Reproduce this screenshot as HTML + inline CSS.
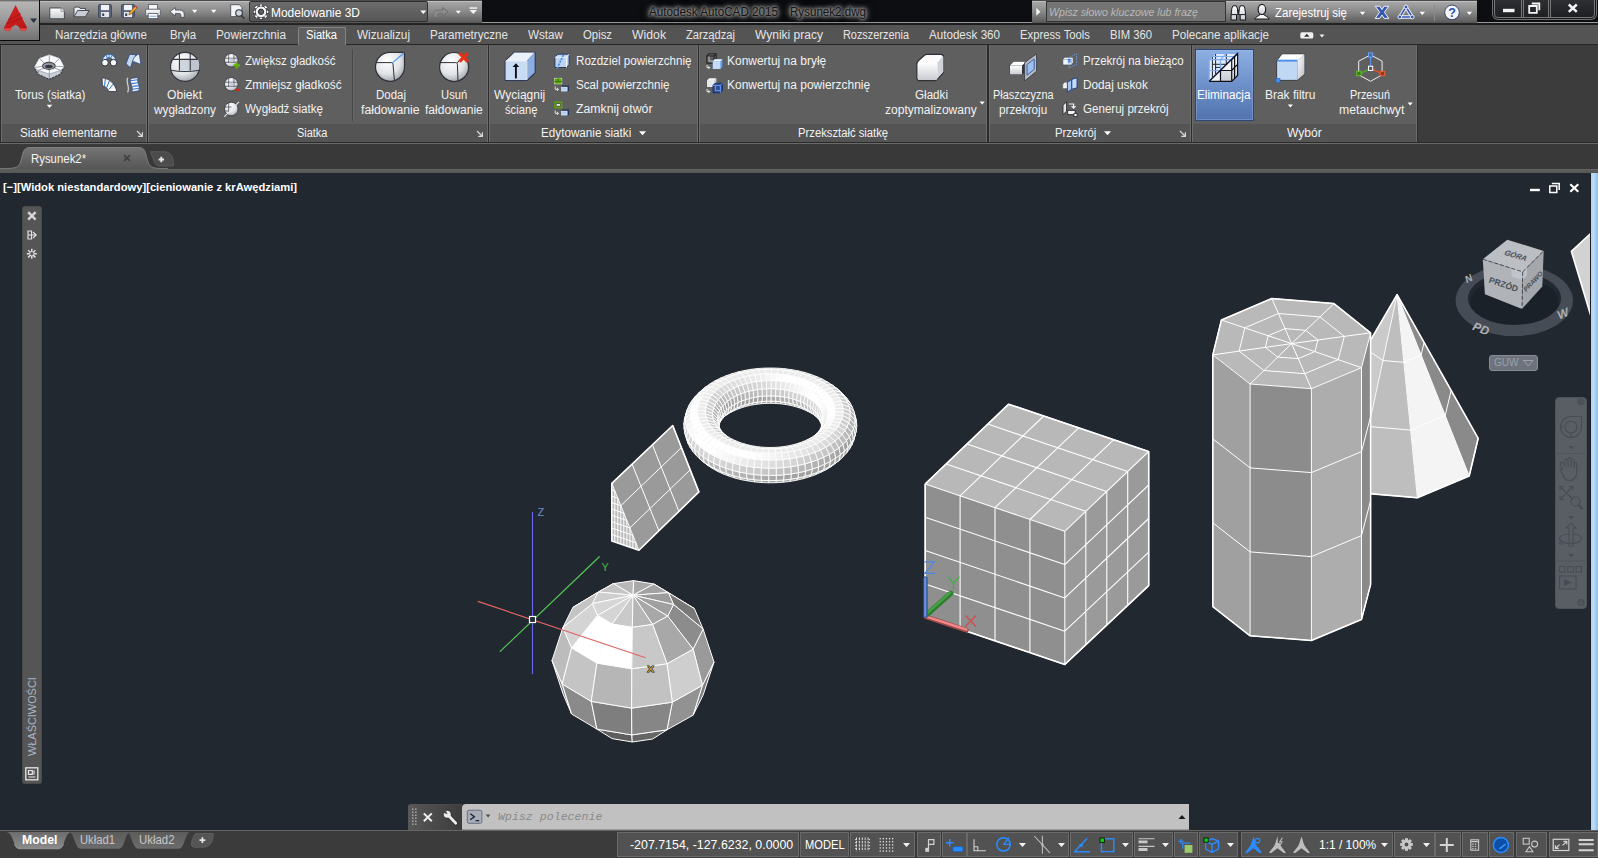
<!DOCTYPE html>
<html lang="pl"><head><meta charset="utf-8"><title>Autodesk AutoCAD 2015 - Rysunek2.dwg</title>
<style>
html,body{margin:0;padding:0;background:#212830;overflow:hidden}
#app{position:relative;width:1598px;height:858px;overflow:hidden;background:#212830;font-family:"Liberation Sans",sans-serif}
#app div,#app svg.ic{position:absolute;box-sizing:border-box}
.tx{position:absolute;white-space:pre;transform-origin:0 50%;display:inline-block}
#titlebar{left:0;top:0;width:1598px;height:24.5px;background:linear-gradient(#0c0e11 0,#0c0e11 22px,#9a9a9a 22.3px,#9a9a9a 22.9px,#1c1c1c 23.2px,#1c1c1c 24.5px)}
#qat{left:40px;top:0;width:442px;height:24.5px;background:linear-gradient(#4a4a4d 0,#4a4a4d 1px,#bfbfbf 1px,#bfbfbf 2px,#a6a6a6 2px,#888 12px,#5e5e5e 22px,#505050 23px,#252525 23.5px,#222 24px)}
#wsbox{left:249.200px;top:1.300px;width:179px;height:21.200px;background:linear-gradient(#6c6c6c,#565656);border:1px solid #303030;border-radius:2px}
#info{left:1032.300px;top:0;width:444.500px;height:24.5px;background:linear-gradient(#4a4a4d 0,#4a4a4d 1px,#bfbfbf 1px,#bfbfbf 2px,#a6a6a6 2px,#888 12px,#5e5e5e 22px,#505050 23px,#252525 23.5px,#222 24px)}
#search{left:1046px;top:1.300px;width:179.500px;height:21.200px;background:#747474;border:1px solid #343434}
#winbtn{left:1494px;top:-2px;width:101px;height:19.500px;border:1px solid #777;border-radius:0 0 4px 4px;background:linear-gradient(#2e3034,#1d1f23);box-shadow:0 0 0 1px #16181b,0 0 0 2px #6e6e6e}
#winbtn i{position:absolute;top:0;width:1px;height:18px;background:#777;box-shadow:2px 0 0 #777}
#appbtn{left:0;top:0;width:40px;height:41px;background:linear-gradient(#5a5a5a 0,#b4b4b4 2px,#a4a4a4 14px,#8a8a8a 28px,#747474 39px);border-right:1px solid #0a0a0a;border-bottom:1.5px solid #0a0a0a}
#tabrow{left:0;top:24.5px;width:1598px;height:20.3px;background:#545454;border-bottom:1px solid #262626}
#acttab{left:298px;top:27px;width:48px;height:18px;background:#5f5f5f;border:1px solid #858585;border-bottom:none;border-radius:2px 2px 0 0}
#ribbon{left:0;top:44.8px;width:1598px;height:98px;background:#2c2c2c}
#ribright{left:1418px;top:44.8px;width:180px;height:98px;background:#3c3c3c}
.pnl{top:44.8px;height:97px;background:#5f5f5f;border-left:1px solid #6c6c6c;border-right:1px solid #6c6c6c}
.pnl b{position:absolute;left:0;right:0;bottom:0;height:18.2px;background:#545454}
#ribline{left:0;top:141.8px;width:1598px;height:2.2px;background:linear-gradient(#2a2a2a 45%,#6a6a6a 55%)}
#filebar{left:0;top:144px;width:1598px;height:25px;background:#393939}
#fileband{left:0;top:168.500px;width:1598px;height:4.600px;background:linear-gradient(#686868 0,#5b5b5b 35%,#585858)}
#status{left:0;top:830.300px;width:1598px;height:28px;background:#3b3b3b;border-top:1px solid #666}
.sb{top:832px;height:25px;background:#525252;border:1px solid #6a6a6a}
#cmdl{left:408px;top:804px;width:54px;height:26px;background:#4e4e4e;border-radius:3px 0 0 0}
#cmdr{left:462px;top:804px;width:727px;height:26px;background:#c1c1c1;border-radius:4px 0 0 0;border-bottom:1px solid #999}
#props{left:22px;top:205.500px;width:20px;height:578.500px;background:#555;border-radius:2.500px;border:1px solid #4a4a4a}
#elim{left:1194.600px;top:49px;width:59px;height:71.600px;background:linear-gradient(#8eafe1,#7093cd 45%,#5172ad);border:1px solid #2c4779;box-shadow:inset 0 0 0 1px rgba(160,190,235,.35)}
#rstripe{left:1590px;top:173px;width:8px;height:658px;background:linear-gradient(90deg,#1b2026 0,#1b2026 1px,#b4d6f4 1px,#bcdcf6 4px,#a0c8ee 6px,#94c0ec 8px)}
#navbar{left:1555px;top:397px;width:32px;height:212px;background:#595e65;border-radius:4px;border:1px solid #4d5259}
#guw{left:1489px;top:355px;width:49px;height:16px;background:#6d727c;border:1px solid #878c96;border-radius:3px}
.vsep{width:1px;background:#474747;box-shadow:1px 0 0 #686868}

</style></head>
<body>
<div id="app">
<svg id="scene" width="1598" height="858" viewBox="0 0 1598 858" style="position:absolute;left:0;top:0">
<g stroke="#fff" stroke-width="0.9" stroke-linejoin="round">
<polygon points="771.7,368 764.7,368.1 765.2,369.4 771.6,369.3" fill="#d2d2d2"/>
<polygon points="778.6,368.2 771.7,368 771.6,369.3 777.9,369.5" fill="#d0d0d0"/>
<polygon points="764.7,368.1 757.8,368.5 758.9,369.8 765.2,369.4" fill="#d3d3d3"/>
<polygon points="785.5,368.8 778.6,368.2 777.9,369.5 784.2,370.1" fill="#cfcfcf"/>
<polygon points="757.8,368.5 751,369.3 752.7,370.5 758.9,369.8" fill="#d5d5d5"/>
<polygon points="792.3,369.8 785.5,368.8 784.2,370.1 790.3,370.9" fill="#cecece"/>
<polygon points="771.2,401.1 766.6,401.2 766.3,403.4 771.3,403.3" fill="#a1a1a1"/>
<polygon points="775.8,401.3 771.2,401.1 771.3,403.3 776.3,403.5" fill="#a1a1a1"/>
<polygon points="766.6,401.2 762,401.5 761.3,403.7 766.3,403.4" fill="#a1a1a1"/>
<polygon points="780.4,401.7 775.8,401.3 776.3,403.5 781.3,403.9" fill="#a1a1a1"/>
<polygon points="751,369.3 744.3,370.5 746.6,371.6 752.7,370.5" fill="#d6d6d6"/>
<polygon points="762,401.5 757.5,402 756.3,404.3 761.3,403.7" fill="#a1a1a1"/>
<polygon points="784.9,402.3 780.4,401.7 781.3,403.9 786.2,404.6" fill="#a1a1a1"/>
<polygon points="798.9,371 792.3,369.8 790.3,370.9 796.4,372.1" fill="#cdcdcd"/>
<polygon points="757.5,402 753.1,402.8 751.5,405.1 756.3,404.3" fill="#a1a1a1"/>
<polygon points="789.2,403.2 784.9,402.3 786.2,404.6 791,405.5" fill="#a1a1a1"/>
<polygon points="744.3,370.5 737.8,372 740.7,372.9 746.6,371.6" fill="#d8d8d8"/>
<polygon points="753.1,402.8 748.8,403.8 746.8,406.2 751.5,405.1" fill="#a1a1a1"/>
<polygon points="805.3,372.6 798.9,371 796.4,372.1 802.2,373.5" fill="#cccccc"/>
<polygon points="793.5,404.2 789.2,403.2 791,405.5 795.6,406.7" fill="#a1a1a1"/>
<polygon points="737.8,372 731.6,373.8 735,374.6 740.7,372.9" fill="#dadada"/>
<polygon points="748.8,403.8 744.7,405 742.3,407.5 746.8,406.2" fill="#a1a1a1"/>
<polygon points="771.6,369.3 765.2,369.4 765.8,373.9 771.4,373.8" fill="#ebebeb"/>
<polygon points="777.9,369.5 771.6,369.3 771.4,373.8 777.1,374" fill="#ebebeb"/>
<polygon points="797.5,405.5 793.5,404.2 795.6,406.7 800.1,408.1" fill="#a1a1a1"/>
<polygon points="765.2,369.4 758.9,369.8 760.2,374.3 765.8,373.9" fill="#ebebeb"/>
<polygon points="811.4,374.6 805.3,372.6 802.2,373.5 807.8,375.3" fill="#cccccc"/>
<polygon points="784.2,370.1 777.9,369.5 777.1,374 782.7,374.5" fill="#ebebeb"/>
<polygon points="758.9,369.8 752.7,370.5 754.6,374.9 760.2,374.3" fill="#ebebeb"/>
<polygon points="744.7,405 740.7,406.3 738,409 742.3,407.5" fill="#a1a1a1"/>
<polygon points="771.2,395.9 766.7,395.9 766.6,401.2 771.2,401.1" fill="#a9a9a9"/>
<polygon points="790.3,370.9 784.2,370.1 782.7,374.5 788.2,375.3" fill="#ebebeb"/>
<polygon points="775.6,396 771.2,395.9 771.2,401.1 775.8,401.3" fill="#ababab"/>
<polygon points="766.7,395.9 762.3,396.2 762,401.5 766.6,401.2" fill="#a6a6a6"/>
<polygon points="780.1,396.4 775.6,396 775.8,401.3 780.4,401.7" fill="#aeaeae"/>
<polygon points="731.6,373.8 725.7,375.9 729.6,376.5 735,374.6" fill="#dcdcdc"/>
<polygon points="801.4,407 797.5,405.5 800.1,408.1 804.3,409.7" fill="#a1a1a1"/>
<polygon points="752.7,370.5 746.6,371.6 749.2,375.9 754.6,374.9" fill="#ebebeb"/>
<polygon points="762.3,396.2 757.9,396.7 757.5,402 762,401.5" fill="#a3a3a3"/>
<polygon points="784.4,397 780.1,396.4 780.4,401.7 784.9,402.3" fill="#b0b0b0"/>
<polygon points="796.4,372.1 790.3,370.9 788.2,375.3 793.5,376.3" fill="#ebebeb"/>
<polygon points="817.2,376.8 811.4,374.6 807.8,375.3 813.1,377.3" fill="#cbcbcb"/>
<polygon points="757.9,396.7 753.7,397.5 753.1,402.8 757.5,402" fill="#a1a1a1"/>
<polygon points="740.7,406.3 737,407.9 733.9,410.8 738,409" fill="#a1a1a1"/>
<polygon points="788.6,397.8 784.4,397 784.9,402.3 789.2,403.2" fill="#b2b2b2"/>
<polygon points="746.6,371.6 740.7,372.9 743.9,377.1 749.2,375.9" fill="#ebebeb"/>
<polygon points="753.7,397.5 749.5,398.4 748.8,403.8 753.1,402.8" fill="#a1a1a1"/>
<polygon points="805,408.6 801.4,407 804.3,409.7 808.2,411.5" fill="#a1a1a1"/>
<polygon points="802.2,373.5 796.4,372.1 793.5,376.3 798.7,377.6" fill="#ebebeb"/>
<polygon points="792.7,398.9 788.6,397.8 789.2,403.2 793.5,404.2" fill="#b4b4b4"/>
<polygon points="725.7,375.9 720.1,378.3 724.5,378.7 729.6,376.5" fill="#dedede"/>
<polygon points="771.4,373.8 765.8,373.9 766.3,380.8 771.3,380.7" fill="#f4f4f4"/>
<polygon points="777.1,374 771.4,373.8 771.3,380.7 776.3,380.9" fill="#f8f8f8"/>
<polygon points="765.8,373.9 760.2,374.3 761.3,381.1 766.3,380.8" fill="#f0f0f0"/>
<polygon points="782.7,374.5 777.1,374 776.3,380.9 781.3,381.3" fill="#fcfcfc"/>
<polygon points="740.7,372.9 735,374.6 738.9,378.5 743.9,377.1" fill="#ebebeb"/>
<polygon points="771.2,388.6 766.6,388.7 766.7,395.9 771.2,395.9" fill="#c5c5c5"/>
<polygon points="749.5,398.4 745.5,399.6 744.7,405 748.8,403.8" fill="#a1a1a1"/>
<polygon points="775.8,388.8 771.2,388.6 771.2,395.9 775.6,396" fill="#c7c7c7"/>
<polygon points="760.2,374.3 754.6,374.9 756.3,381.7 761.3,381.1" fill="#ececec"/>
<polygon points="737,407.9 733.6,409.7 730.2,412.7 733.9,410.8" fill="#a1a1a1"/>
<polygon points="766.6,388.7 762,389 762.3,396.2 766.7,395.9" fill="#c2c2c2"/>
<polygon points="822.7,379.3 817.2,376.8 813.1,377.3 818,379.6" fill="#cbcbcb"/>
<polygon points="780.4,389.2 775.8,388.8 775.6,396 780.1,396.4" fill="#cacaca"/>
<polygon points="788.2,375.3 782.7,374.5 781.3,381.3 786.2,382" fill="#ffffff"/>
<polygon points="796.6,400.1 792.7,398.9 793.5,404.2 797.5,405.5" fill="#b5b5b5"/>
<polygon points="807.8,375.3 802.2,373.5 798.7,377.6 803.7,379.2" fill="#ebebeb"/>
<polygon points="762,389 757.5,389.5 757.9,396.7 762.3,396.2" fill="#bfbfbf"/>
<polygon points="784.9,389.8 780.4,389.2 780.1,396.4 784.4,397" fill="#cccccc"/>
<polygon points="754.6,374.9 749.2,375.9 751.5,382.5 756.3,381.7" fill="#e9e9e9"/>
<polygon points="808.3,410.5 805,408.6 808.2,411.5 811.9,413.5" fill="#a1a1a1"/>
<polygon points="771.3,380.7 766.3,380.8 766.6,388.7 771.2,388.6" fill="#dddddd"/>
<polygon points="776.3,380.9 771.3,380.7 771.2,388.6 775.8,388.8" fill="#e1e1e1"/>
<polygon points="766.3,380.8 761.3,381.1 762,389 766.6,388.7" fill="#dadada"/>
<polygon points="793.5,376.3 788.2,375.3 786.2,382 791,382.9" fill="#ffffff"/>
<polygon points="757.5,389.5 753.1,390.3 753.7,397.5 757.9,396.7" fill="#bcbcbc"/>
<polygon points="781.3,381.3 776.3,380.9 775.8,388.8 780.4,389.2" fill="#e4e4e4"/>
<polygon points="745.5,399.6 741.7,400.9 740.7,406.3 744.7,405" fill="#a1a1a1"/>
<polygon points="761.3,381.1 756.3,381.7 757.5,389.5 762,389" fill="#d7d7d7"/>
<polygon points="789.2,390.6 784.9,389.8 784.4,397 788.6,397.8" fill="#cecece"/>
<polygon points="735,374.6 729.6,376.5 734,380.2 738.9,378.5" fill="#ebebeb"/>
<polygon points="786.2,382 781.3,381.3 780.4,389.2 784.9,389.8" fill="#e8e8e8"/>
<polygon points="720.1,378.3 714.8,380.9 719.8,381.1 724.5,378.7" fill="#e1e1e1"/>
<polygon points="800.3,401.5 796.6,400.1 797.5,405.5 801.4,407" fill="#b7b7b7"/>
<polygon points="749.2,375.9 743.9,377.1 746.8,383.6 751.5,382.5" fill="#e6e6e6"/>
<polygon points="733.6,409.7 730.4,411.6 726.7,414.8 730.2,412.7" fill="#a1a1a1"/>
<polygon points="753.1,390.3 748.8,391.2 749.5,398.4 753.7,397.5" fill="#b9b9b9"/>
<polygon points="756.3,381.7 751.5,382.5 753.1,390.3 757.5,389.5" fill="#d4d4d4"/>
<polygon points="798.7,377.6 793.5,376.3 791,382.9 795.6,384.1" fill="#ffffff"/>
<polygon points="813.1,377.3 807.8,375.3 803.7,379.2 808.4,381" fill="#ebebeb"/>
<polygon points="793.5,391.7 789.2,390.6 788.6,397.8 792.7,398.9" fill="#d0d0d0"/>
<polygon points="791,382.9 786.2,382 784.9,389.8 789.2,390.6" fill="#ececec"/>
<polygon points="741.7,400.9 738.1,402.5 737,407.9 740.7,406.3" fill="#a1a1a1"/>
<polygon points="827.7,382.1 822.7,379.3 818,379.6 822.6,382.1" fill="#cacaca"/>
<polygon points="811.4,412.4 808.3,410.5 811.9,413.5 815.2,415.7" fill="#a1a1a1"/>
<polygon points="743.9,377.1 738.9,378.5 742.3,384.9 746.8,383.6" fill="#e3e3e3"/>
<polygon points="751.5,382.5 746.8,383.6 748.8,391.2 753.1,390.3" fill="#d1d1d1"/>
<polygon points="748.8,391.2 744.7,392.4 745.5,399.6 749.5,398.4" fill="#b6b6b6"/>
<polygon points="803.8,403.1 800.3,401.5 801.4,407 805,408.6" fill="#b8b8b8"/>
<polygon points="795.6,384.1 791,382.9 789.2,390.6 793.5,391.7" fill="#f0f0f0"/>
<polygon points="729.6,376.5 724.5,378.7 729.5,382.2 734,380.2" fill="#ebebeb"/>
<polygon points="797.5,393 793.5,391.7 792.7,398.9 796.6,400.1" fill="#d2d2d2"/>
<polygon points="803.7,379.2 798.7,377.6 795.6,384.1 800.1,385.5" fill="#ffffff"/>
<polygon points="730.4,411.6 727.5,413.7 723.6,417.1 726.7,414.8" fill="#a1a1a1"/>
<polygon points="746.8,383.6 742.3,384.9 744.7,392.4 748.8,391.2" fill="#cecece"/>
<polygon points="738.1,402.5 734.8,404.2 733.6,409.7 737,407.9" fill="#a1a1a1"/>
<polygon points="818,379.6 813.1,377.3 808.4,381 812.9,383" fill="#ebebeb"/>
<polygon points="744.7,392.4 740.7,393.8 741.7,400.9 745.5,399.6" fill="#b2b2b2"/>
<polygon points="714.8,380.9 710,383.8 715.4,383.7 719.8,381.1" fill="#e4e4e4"/>
<polygon points="840.6,391.7 836.2,388.3 832.3,385.1 836.5,388.3" fill="#ababab"/>
<polygon points="738.9,378.5 734,380.2 738,386.4 742.3,384.9" fill="#e0e0e0"/>
<polygon points="800.1,385.5 795.6,384.1 793.5,391.7 797.5,393" fill="#f4f4f4"/>
<polygon points="801.4,394.4 797.5,393 796.6,400.1 800.3,401.5" fill="#d4d4d4"/>
<polygon points="814.1,414.6 811.4,412.4 815.2,415.7 818.2,418" fill="#a1a1a1"/>
<polygon points="807.1,404.9 803.8,403.1 805,408.6 808.3,410.5" fill="#b8b8b8"/>
<polygon points="808.4,381 803.7,379.2 800.1,385.5 804.3,387.1" fill="#ffffff"/>
<polygon points="742.3,384.9 738,386.4 740.7,393.8 744.7,392.4" fill="#cbcbcb"/>
<polygon points="832.3,385.1 827.7,382.1 822.6,382.1 826.8,384.9" fill="#cacaca"/>
<polygon points="724.5,378.7 719.8,381.1 725.2,384.4 729.5,382.2" fill="#ebebeb"/>
<polygon points="740.7,393.8 737,395.4 738.1,402.5 741.7,400.9" fill="#afafaf"/>
<polygon points="734.8,404.2 731.7,406 730.4,411.6 733.6,409.7" fill="#a1a1a1"/>
<polygon points="804.3,387.1 800.1,385.5 797.5,393 801.4,394.4" fill="#f8f8f8"/>
<polygon points="734,380.2 729.5,382.2 733.9,388.2 738,386.4" fill="#dedede"/>
<polygon points="727.5,413.7 725,415.9 720.8,419.5 723.6,417.1" fill="#a1a1a1"/>
<polygon points="805,396.1 801.4,394.4 800.3,401.5 803.8,403.1" fill="#d5d5d5"/>
<polygon points="701.7,390.3 697.7,393.9 701.9,390.3 705.7,387" fill="#d5d5d5"/>
<polygon points="822.6,382.1 818,379.6 812.9,383 817,385.3" fill="#ebebeb"/>
<polygon points="810,406.8 807.1,404.9 808.3,410.5 811.4,412.4" fill="#b9b9b9"/>
<polygon points="812.9,383 808.4,381 804.3,387.1 808.2,388.9" fill="#ffffff"/>
<polygon points="738,386.4 733.9,388.2 737,395.4 740.7,393.8" fill="#c9c9c9"/>
<polygon points="710,383.8 705.7,387 711.5,386.6 715.4,383.7" fill="#e6e6e6"/>
<polygon points="737,395.4 733.6,397.2 734.8,404.2 738.1,402.5" fill="#acacac"/>
<polygon points="808.2,388.9 804.3,387.1 801.4,394.4 805,396.1" fill="#fbfbfb"/>
<polygon points="844.4,395.4 840.6,391.7 836.5,388.3 840.1,391.7" fill="#ababab"/>
<polygon points="719.8,381.1 715.4,383.7 721.3,386.7 725.2,384.4" fill="#ebebeb"/>
<polygon points="731.7,406 729,408 727.5,413.7 730.4,411.6" fill="#a1a1a1"/>
<polygon points="808.3,397.9 805,396.1 803.8,403.1 807.1,404.9" fill="#d6d6d6"/>
<polygon points="729.5,382.2 725.2,384.4 730.2,390.1 733.9,388.2" fill="#dcdcdc"/>
<polygon points="836.5,388.3 832.3,385.1 826.8,384.9 830.6,387.8" fill="#cacaca"/>
<polygon points="733.9,388.2 730.2,390.1 733.6,397.2 737,395.4" fill="#c6c6c6"/>
<polygon points="812.7,408.9 810,406.8 811.4,412.4 814.1,414.6" fill="#b9b9b9"/>
<polygon points="817,385.3 812.9,383 808.2,388.9 811.9,390.9" fill="#ffffff"/>
<polygon points="826.8,384.9 822.6,382.1 817,385.3 820.7,387.7" fill="#ebebeb"/>
<polygon points="733.6,397.2 730.4,399.1 731.7,406 734.8,404.2" fill="#a9a9a9"/>
<polygon points="811.9,390.9 808.2,388.9 805,396.1 808.3,397.9" fill="#fefefe"/>
<polygon points="811.4,399.9 808.3,397.9 807.1,404.9 810,406.8" fill="#d6d6d6"/>
<polygon points="697.7,393.9 694.1,397.7 698.5,393.9 701.9,390.3" fill="#d8d8d8"/>
<polygon points="729,408 726.5,410.2 725,415.9 727.5,413.7" fill="#a1a1a1"/>
<polygon points="725.2,384.4 721.3,386.7 726.7,392.2 730.2,390.1" fill="#dadada"/>
<polygon points="705.7,387 701.9,390.3 708,389.7 711.5,386.6" fill="#eaeaea"/>
<polygon points="715.4,383.7 711.5,386.6 717.8,389.3 721.3,386.7" fill="#ebebeb"/>
<polygon points="730.2,390.1 726.7,392.2 730.4,399.1 733.6,397.2" fill="#c3c3c3"/>
<polygon points="815,411.1 812.7,408.9 814.1,414.6 816.5,416.9" fill="#b9b9b9"/>
<polygon points="730.4,399.1 727.5,401.2 729,408 731.7,406" fill="#a5a5a5"/>
<polygon points="820.7,387.7 817,385.3 811.9,390.9 815.2,393.1" fill="#ffffff"/>
<polygon points="847.7,399.2 844.4,395.4 840.1,391.7 843.2,395.3" fill="#ababab"/>
<polygon points="815.2,393.1 811.9,390.9 808.3,397.9 811.4,399.9" fill="#ffffff"/>
<polygon points="840.1,391.7 836.5,388.3 830.6,387.8 833.9,390.9" fill="#cacaca"/>
<polygon points="830.6,387.8 826.8,384.9 820.7,387.7 824.1,390.4" fill="#ebebeb"/>
<polygon points="814.1,402.1 811.4,399.9 810,406.8 812.7,408.9" fill="#d6d6d6"/>
<polygon points="726.5,410.2 724.4,412.5 722.8,418.3 725,415.9" fill="#a1a1a1"/>
<polygon points="721.3,386.7 717.8,389.3 723.6,394.5 726.7,392.2" fill="#d8d8d8"/>
<polygon points="726.7,392.2 723.6,394.5 727.5,401.2 730.4,399.1" fill="#c1c1c1"/>
<polygon points="727.5,401.2 725,403.4 726.5,410.2 729,408" fill="#a2a2a2"/>
<polygon points="817,413.4 815,411.1 816.5,416.9 818.6,419.2" fill="#b8b8b8"/>
<polygon points="711.5,386.6 708,389.7 714.7,392 717.8,389.3" fill="#ebebeb"/>
<polygon points="824.1,390.4 820.7,387.7 815.2,393.1 818.2,395.4" fill="#ffffff"/>
<polygon points="701.9,390.3 698.5,393.9 704.9,392.9 708,389.7" fill="#ededed"/>
<polygon points="818.2,395.4 815.2,393.1 811.4,399.9 814.1,402.1" fill="#ffffff"/>
<polygon points="694.1,397.7 691.2,401.6 695.8,397.6 698.5,393.9" fill="#dbdbdb"/>
<polygon points="816.5,404.3 814.1,402.1 812.7,408.9 815,411.1" fill="#d6d6d6"/>
<polygon points="833.9,390.9 830.6,387.8 824.1,390.4 827,393.1" fill="#ebebeb"/>
<polygon points="724.4,412.5 722.6,414.8 721,420.7 722.8,418.3" fill="#a1a1a1"/>
<polygon points="843.2,395.3 840.1,391.7 833.9,390.9 836.8,394.2" fill="#cacaca"/>
<polygon points="723.6,394.5 720.8,396.9 725,403.4 727.5,401.2" fill="#bebebe"/>
<polygon points="717.8,389.3 714.7,392 720.8,396.9 723.6,394.5" fill="#d6d6d6"/>
<polygon points="850.4,403.2 847.7,399.2 843.2,395.3 845.8,399.1" fill="#acacac"/>
<polygon points="725,403.4 722.8,405.7 724.4,412.5 726.5,410.2" fill="#a1a1a1"/>
<polygon points="818.6,415.8 817,413.4 818.6,419.2 820.3,421.7" fill="#b8b8b8"/>
<polygon points="820.8,397.9 818.2,395.4 814.1,402.1 816.5,404.3" fill="#ffffff"/>
<polygon points="827,393.1 824.1,390.4 818.2,395.4 820.8,397.9" fill="#ffffff"/>
<polygon points="708,389.7 704.9,392.9 712,394.9 714.7,392" fill="#ebebeb"/>
<polygon points="818.6,406.7 816.5,404.3 815,411.1 817,413.4" fill="#d6d6d6"/>
<polygon points="698.5,393.9 695.8,397.6 702.4,396.3 704.9,392.9" fill="#f1f1f1"/>
<polygon points="722.6,414.8 721.2,417.3 719.5,423.2 721,420.7" fill="#a1a1a1"/>
<polygon points="720.8,396.9 718.4,399.5 722.8,405.7 725,403.4" fill="#bcbcbc"/>
<polygon points="691.2,401.6 688.8,405.6 693.6,401.4 695.8,397.6" fill="#dedede"/>
<polygon points="836.8,394.2 833.9,390.9 827,393.1 829.6,396.1" fill="#ebebeb"/>
<polygon points="714.7,392 712,394.9 718.4,399.5 720.8,396.9" fill="#d4d4d4"/>
<polygon points="722.8,405.7 721,408.2 722.6,414.8 724.4,412.5" fill="#a1a1a1"/>
<polygon points="819.9,418.3 818.6,415.8 820.3,421.7 821.6,424.3" fill="#b7b7b7"/>
<polygon points="823.1,400.5 820.8,397.9 816.5,404.3 818.6,406.7" fill="#fefefe"/>
<polygon points="845.8,399.1 843.2,395.3 836.8,394.2 839.1,397.6" fill="#cbcbcb"/>
<polygon points="829.6,396.1 827,393.1 820.8,397.9 823.1,400.5" fill="#ffffff"/>
<polygon points="820.3,409.2 818.6,406.7 817,413.4 818.6,415.8" fill="#d5d5d5"/>
<polygon points="852.5,407.3 850.4,403.2 845.8,399.1 847.8,402.9" fill="#adadad"/>
<polygon points="704.9,392.9 702.4,396.3 709.7,397.9 712,394.9" fill="#ebebeb"/>
<polygon points="721.2,417.3 720.1,419.8 718.4,425.8 719.5,423.2" fill="#a1a1a1"/>
<polygon points="718.4,399.5 716.4,402.1 721,408.2 722.8,405.7" fill="#bababa"/>
<polygon points="721,408.2 719.5,410.7 721.2,417.3 722.6,414.8" fill="#a1a1a1"/>
<polygon points="712,394.9 709.7,397.9 716.4,402.1 718.4,399.5" fill="#d3d3d3"/>
<polygon points="695.8,397.6 693.6,401.4 700.4,399.7 702.4,396.3" fill="#f5f5f5"/>
<polygon points="820.8,420.8 819.9,418.3 821.6,424.3 822.5,426.9" fill="#b6b6b6"/>
<polygon points="839.1,397.6 836.8,394.2 829.6,396.1 831.6,399.1" fill="#ebebeb"/>
<polygon points="824.9,403.2 823.1,400.5 818.6,406.7 820.3,409.2" fill="#fcfcfc"/>
<polygon points="821.6,411.7 820.3,409.2 818.6,415.8 819.9,418.3" fill="#d4d4d4"/>
<polygon points="688.8,405.6 687.1,409.8 691.9,405.3 693.6,401.4" fill="#e2e2e2"/>
<polygon points="831.6,399.1 829.6,396.1 823.1,400.5 824.9,403.2" fill="#ffffff"/>
<polygon points="847.8,402.9 845.8,399.1 839.1,397.6 840.9,401.1" fill="#cbcbcb"/>
<polygon points="720.1,419.8 719.5,422.3 717.7,428.5 718.4,425.8" fill="#a1a1a1"/>
<polygon points="685.4,415.9 684.3,420.2 686,414 687.1,409.8" fill="#cbcbcb"/>
<polygon points="716.4,402.1 714.8,404.9 719.5,410.7 721,408.2" fill="#b7b7b7"/>
<polygon points="702.4,396.3 700.4,399.7 708,401 709.7,397.9" fill="#ebebeb"/>
<polygon points="719.5,410.7 718.4,413.3 720.1,419.8 721.2,417.3" fill="#a1a1a1"/>
<polygon points="854,411.5 852.5,407.3 847.8,402.9 849.2,406.9" fill="#adadad"/>
<polygon points="709.7,397.9 708,401 714.8,404.9 716.4,402.1" fill="#d1d1d1"/>
<polygon points="826.3,406 824.9,403.2 820.3,409.2 821.6,411.7" fill="#f9f9f9"/>
<polygon points="822.5,414.4 821.6,411.7 819.9,418.3 820.8,420.8" fill="#d3d3d3"/>
<polygon points="840.9,401.1 839.1,397.6 831.6,399.1 833.2,402.2" fill="#ebebeb"/>
<polygon points="856.6,421.9 855.7,417.6 854,411.5 854.8,415.7" fill="#a1a1a1"/>
<polygon points="693.6,401.4 691.9,405.3 698.9,403.3 700.4,399.7" fill="#f9f9f9"/>
<polygon points="833.2,402.2 831.6,399.1 824.9,403.2 826.3,406" fill="#ffffff"/>
<polygon points="714.8,404.9 713.6,407.7 718.4,413.3 719.5,410.7" fill="#b5b5b5"/>
<polygon points="718.4,413.3 717.7,415.9 719.5,422.3 720.1,419.8" fill="#a1a1a1"/>
<polygon points="687.1,409.8 686,414 690.9,409.3 691.9,405.3" fill="#e5e5e5"/>
<polygon points="849.2,406.9 847.8,402.9 840.9,401.1 842.1,404.7" fill="#cccccc"/>
<polygon points="700.4,399.7 698.9,403.3 706.6,404.2 708,401" fill="#ebebeb"/>
<polygon points="827.4,408.9 826.3,406 821.6,411.7 822.5,414.4" fill="#f5f5f5"/>
<polygon points="708,401 706.6,404.2 713.6,407.7 714.8,404.9" fill="#d0d0d0"/>
<polygon points="823,417 822.5,414.4 820.8,420.8 821.3,423.3" fill="#d1d1d1"/>
<polygon points="684.3,420.2 683.8,424.5 685.6,418.3 686,414" fill="#cdcdcd"/>
<polygon points="854.8,415.7 854,411.5 849.2,406.9 849.9,410.9" fill="#afafaf"/>
<polygon points="842.1,404.7 840.9,401.1 833.2,402.2 834.4,405.5" fill="#ebebeb"/>
<polygon points="834.4,405.5 833.2,402.2 826.3,406 827.4,408.9" fill="#ffffff"/>
<polygon points="713.6,407.7 712.9,410.6 717.7,415.9 718.4,413.3" fill="#b3b3b3"/>
<polygon points="717.7,415.9 717.5,418.6 719.2,424.9 719.5,422.3" fill="#a1a1a1"/>
<polygon points="691.9,405.3 690.9,409.3 698,406.9 698.9,403.3" fill="#fdfdfd"/>
<polygon points="856.8,426.3 856.6,421.9 854.8,415.7 855,420" fill="#a1a1a1"/>
<polygon points="823.1,419.7 823,417 821.3,423.3 821.4,425.9" fill="#cfcfcf"/>
<polygon points="827.9,411.8 827.4,408.9 822.5,414.4 823,417" fill="#f1f1f1"/>
<polygon points="706.6,404.2 705.8,407.4 712.9,410.6 713.6,407.7" fill="#cfcfcf"/>
<polygon points="698.9,403.3 698,406.9 705.8,407.4 706.6,404.2" fill="#ebebeb"/>
<polygon points="849.9,410.9 849.2,406.9 842.1,404.7 842.9,408.4" fill="#cccccc"/>
<polygon points="686,414 685.6,418.3 690.5,413.3 690.9,409.3" fill="#e9e9e9"/>
<polygon points="835,408.7 834.4,405.5 827.4,408.9 827.9,411.8" fill="#ffffff"/>
<polygon points="717.5,418.6 717.6,421.3 719.3,427.5 719.2,424.9" fill="#a1a1a1"/>
<polygon points="712.9,410.6 712.5,413.5 717.5,418.6 717.7,415.9" fill="#b2b2b2"/>
<polygon points="842.9,408.4 842.1,404.7 834.4,405.5 835,408.7" fill="#ebebeb"/>
<polygon points="683.8,424.5 684,428.9 685.8,422.5 685.6,418.3" fill="#cfcfcf"/>
<polygon points="855,420 854.8,415.7 849.9,410.9 850.1,414.9" fill="#b0b0b0"/>
<polygon points="822.9,422.3 823.1,419.7 821.4,425.9 821.1,428.5" fill="#cdcdcd"/>
<polygon points="828.1,414.7 827.9,411.8 823,417 823.1,419.7" fill="#ededed"/>
<polygon points="690.9,409.3 690.5,413.3 697.6,410.6 698,406.9" fill="#ffffff"/>
<polygon points="705.8,407.4 705.4,410.7 712.5,413.5 712.9,410.6" fill="#cecece"/>
<polygon points="856.3,430.6 856.8,426.3 855,420 854.6,424.3" fill="#a1a1a1"/>
<polygon points="698,406.9 697.6,410.6 705.4,410.7 705.8,407.4" fill="#ebebeb"/>
<polygon points="717.6,421.3 718.1,423.9 719.8,430 719.3,427.5" fill="#a1a1a1"/>
<polygon points="850.1,414.9 849.9,410.9 842.9,408.4 843,412.1" fill="#cdcdcd"/>
<polygon points="712.5,413.5 712.7,416.4 717.6,421.3 717.5,418.6" fill="#b0b0b0"/>
<polygon points="835.2,412 835,408.7 827.9,411.8 828.1,414.7" fill="#ffffff"/>
<polygon points="685.6,418.3 685.8,422.5 690.7,417.3 690.5,413.3" fill="#ededed"/>
<polygon points="853.5,441 854.6,436.8 856.3,430.6 855.2,434.9" fill="#a1a1a1"/>
<polygon points="822.2,425 822.9,422.3 821.1,428.5 820.5,431" fill="#cbcbcb"/>
<polygon points="843,412.1 842.9,408.4 835,408.7 835.2,412" fill="#ebebeb"/>
<polygon points="827.7,417.6 828.1,414.7 823.1,419.7 822.9,422.3" fill="#e9e9e9"/>
<polygon points="684,428.9 684.9,433.2 686.6,426.8 685.8,422.5" fill="#d1d1d1"/>
<polygon points="705.4,410.7 705.6,413.9 712.7,416.4 712.5,413.5" fill="#cdcdcd"/>
<polygon points="854.6,424.3 855,420 850.1,414.9 849.7,418.9" fill="#b2b2b2"/>
<polygon points="690.5,413.3 690.7,417.3 697.7,414.2 697.6,410.6" fill="#ffffff"/>
<polygon points="712.7,416.4 713.2,419.3 718.1,423.9 717.6,421.3" fill="#afafaf"/>
<polygon points="697.6,410.6 697.7,414.2 705.6,413.9 705.4,410.7" fill="#ebebeb"/>
<polygon points="686.6,439.3 688.1,443.5 686.4,437.5 684.9,433.2" fill="#b6b6b6"/>
<polygon points="834.8,415.2 835.2,412 828.1,414.7 827.7,417.6" fill="#ffffff"/>
<polygon points="855.2,434.9 856.3,430.6 854.6,424.3 853.5,428.5" fill="#a1a1a1"/>
<polygon points="849.7,418.9 850.1,414.9 843,412.1 842.6,415.7" fill="#cecece"/>
<polygon points="827,420.5 827.7,417.6 822.9,422.3 822.2,425" fill="#e5e5e5"/>
<polygon points="842.6,415.7 843,412.1 835.2,412 834.8,415.2" fill="#ebebeb"/>
<polygon points="685.8,422.5 686.6,426.8 691.4,421.3 690.7,417.3" fill="#f1f1f1"/>
<polygon points="851.8,445.2 853.5,441 855.2,434.9 853.4,439.2" fill="#a1a1a1"/>
<polygon points="705.6,413.9 706.2,417.2 713.2,419.3 712.7,416.4" fill="#cccccc"/>
<polygon points="713.2,419.3 714.3,422.2 719,426.5 718.1,423.9" fill="#adadad"/>
<polygon points="690.7,417.3 691.4,421.3 698.5,417.9 697.7,414.2" fill="#ffffff"/>
<polygon points="853.5,428.5 854.6,424.3 849.7,418.9 848.7,422.9" fill="#b3b3b3"/>
<polygon points="684.9,433.2 686.4,437.5 688.1,431 686.6,426.8" fill="#d3d3d3"/>
<polygon points="697.7,414.2 698.5,417.9 706.2,417.2 705.6,413.9" fill="#ebebeb"/>
<polygon points="834,418.5 834.8,415.2 827.7,417.6 827,420.5" fill="#fdfdfd"/>
<polygon points="825.8,423.3 827,420.5 822.2,425 821.1,427.6" fill="#e2e2e2"/>
<polygon points="688.1,443.5 690.2,447.6 688.5,441.7 686.4,437.5" fill="#b7b7b7"/>
<polygon points="848.7,422.9 849.7,418.9 842.6,415.7 841.7,419.3" fill="#cfcfcf"/>
<polygon points="841.7,419.3 842.6,415.7 834.8,415.2 834,418.5" fill="#ebebeb"/>
<polygon points="853.4,439.2 855.2,434.9 853.5,428.5 851.8,432.6" fill="#a1a1a1"/>
<polygon points="706.2,417.2 707.4,420.4 714.3,422.2 713.2,419.3" fill="#cccccc"/>
<polygon points="714.3,422.2 715.7,425 720.3,429.1 719,426.5" fill="#adadad"/>
<polygon points="686.6,426.8 688.1,431 692.8,425.3 691.4,421.3" fill="#f5f5f5"/>
<polygon points="849.4,449.2 851.8,445.2 853.4,439.2 851.1,443.3" fill="#a1a1a1"/>
<polygon points="824.2,426.1 825.8,423.3 821.1,427.6 819.6,430.1" fill="#dedede"/>
<polygon points="832.6,421.6 834,418.5 827,420.5 825.8,423.3" fill="#f9f9f9"/>
<polygon points="698.5,417.9 699.7,421.5 707.4,420.4 706.2,417.2" fill="#ebebeb"/>
<polygon points="691.4,421.3 692.8,425.3 699.7,421.5 698.5,417.9" fill="#ffffff"/>
<polygon points="851.8,432.6 853.5,428.5 848.7,422.9 847,426.8" fill="#b5b5b5"/>
<polygon points="686.4,437.5 688.5,441.7 690.2,435.1 688.1,431" fill="#d4d4d4"/>
<polygon points="715.7,425 717.5,427.7 722,431.6 720.3,429.1" fill="#acacac"/>
<polygon points="840.2,422.9 841.7,419.3 834,418.5 832.6,421.6" fill="#ebebeb"/>
<polygon points="707.4,420.4 709,423.5 715.7,425 714.3,422.2" fill="#cbcbcb"/>
<polygon points="690.2,447.6 692.9,451.6 691.3,445.7 688.5,441.7" fill="#b8b8b8"/>
<polygon points="847,426.8 848.7,422.9 841.7,419.3 840.2,422.9" fill="#d0d0d0"/>
<polygon points="822.2,428.7 824.2,426.1 819.6,430.1 817.8,432.5" fill="#dbdbdb"/>
<polygon points="851.1,443.3 853.4,439.2 851.8,432.6 849.4,436.7" fill="#a1a1a1"/>
<polygon points="830.9,424.7 832.6,421.6 825.8,423.3 824.2,426.1" fill="#f5f5f5"/>
<polygon points="688.1,431 690.2,435.1 694.8,429.1 692.8,425.3" fill="#f9f9f9"/>
<polygon points="846.5,453.1 849.4,449.2 851.1,443.3 848,447.3" fill="#a1a1a1"/>
<polygon points="699.7,421.5 701.5,425 709,423.5 707.4,420.4" fill="#ebebeb"/>
<polygon points="717.5,427.7 719.8,430.3 724.1,433.9 722,431.6" fill="#ababab"/>
<polygon points="692.8,425.3 694.8,429.1 701.5,425 699.7,421.5" fill="#ffffff"/>
<polygon points="709,423.5 711,426.6 717.5,427.7 715.7,425" fill="#cbcbcb"/>
<polygon points="849.4,436.7 851.8,432.6 847,426.8 844.8,430.6" fill="#b7b7b7"/>
<polygon points="819.8,431.3 822.2,428.7 817.8,432.5 815.6,434.9" fill="#d8d8d8"/>
<polygon points="838.2,426.4 840.2,422.9 832.6,421.6 830.9,424.7" fill="#ebebeb"/>
<polygon points="688.5,441.7 691.3,445.7 692.9,439.1 690.2,435.1" fill="#d5d5d5"/>
<polygon points="844.8,430.6 847,426.8 840.2,422.9 838.2,426.4" fill="#d1d1d1"/>
<polygon points="828.6,427.7 830.9,424.7 824.2,426.1 822.2,428.7" fill="#f1f1f1"/>
<polygon points="692.9,451.6 696.2,455.4 694.6,449.6 691.3,445.7" fill="#b8b8b8"/>
<polygon points="719.8,430.3 722.4,432.8 726.5,436.2 724.1,433.9" fill="#ababab"/>
<polygon points="848,447.3 851.1,443.3 849.4,436.7 846.5,440.6" fill="#a1a1a1"/>
<polygon points="701.5,425 703.8,428.4 711,426.6 709,423.5" fill="#ebebeb"/>
<polygon points="690.2,435.1 692.9,439.1 697.4,432.9 694.8,429.1" fill="#fcfcfc"/>
<polygon points="834.9,463.8 838.7,460.5 842.9,456.9 838.9,460.5" fill="#a1a1a1"/>
<polygon points="842.9,456.9 846.5,453.1 848,447.3 844.4,451.1" fill="#a1a1a1"/>
<polygon points="817,433.7 819.8,431.3 815.6,434.9 813.1,437.1" fill="#d5d5d5"/>
<polygon points="711,426.6 713.6,429.5 719.8,430.3 717.5,427.7" fill="#cacaca"/>
<polygon points="694.8,429.1 697.4,432.9 703.8,428.4 701.5,425" fill="#ffffff"/>
<polygon points="835.7,429.7 838.2,426.4 830.9,424.7 828.6,427.7" fill="#ebebeb"/>
<polygon points="825.9,430.6 828.6,427.7 822.2,428.7 819.8,431.3" fill="#ededed"/>
<polygon points="846.5,440.6 849.4,436.7 844.8,430.6 842.1,434.3" fill="#bababa"/>
<polygon points="722.4,432.8 725.4,435.1 729.2,438.4 726.5,436.2" fill="#ababab"/>
<polygon points="691.3,445.7 694.6,449.6 696.2,442.9 692.9,439.1" fill="#d6d6d6"/>
<polygon points="704.1,462.5 708.3,465.7 704.4,462.5 700,459.1" fill="#a1a1a1"/>
<polygon points="842.1,434.3 844.8,430.6 838.2,426.4 835.7,429.7" fill="#d3d3d3"/>
<polygon points="696.2,455.4 700,459.1 698.6,453.4 694.6,449.6" fill="#b9b9b9"/>
<polygon points="703.8,428.4 706.7,431.7 713.6,429.5 711,426.6" fill="#ebebeb"/>
<polygon points="713.6,429.5 716.5,432.3 722.4,432.8 719.8,430.3" fill="#cacaca"/>
<polygon points="844.4,451.1 848,447.3 846.5,440.6 842.9,444.4" fill="#a1a1a1"/>
<polygon points="830.6,467 834.9,463.8 838.9,460.5 834.3,463.8" fill="#a1a1a1"/>
<polygon points="692.9,439.1 696.2,442.9 700.5,436.5 697.4,432.9" fill="#fefefe"/>
<polygon points="838.9,460.5 842.9,456.9 844.4,451.1 840.3,454.8" fill="#a1a1a1"/>
<polygon points="822.8,433.3 825.9,430.6 819.8,431.3 817,433.7" fill="#eaeaea"/>
<polygon points="697.4,432.9 700.5,436.5 706.7,431.7 703.8,428.4" fill="#ffffff"/>
<polygon points="832.6,433 835.7,429.7 828.6,427.7 825.9,430.6" fill="#ebebeb"/>
<polygon points="842.9,444.4 846.5,440.6 842.1,434.3 838.7,437.9" fill="#bcbcbc"/>
<polygon points="708.3,465.7 712.9,468.7 709.3,465.7 704.4,462.5" fill="#a1a1a1"/>
<polygon points="838.7,437.9 842.1,434.3 835.7,429.7 832.6,433" fill="#d4d4d4"/>
<polygon points="694.6,449.6 698.6,453.4 700,446.5 696.2,442.9" fill="#d6d6d6"/>
<polygon points="716.5,432.3 719.9,434.9 725.4,435.1 722.4,432.8" fill="#cacaca"/>
<polygon points="706.7,431.7 710,434.8 716.5,432.3 713.6,429.5" fill="#ebebeb"/>
<polygon points="700,459.1 704.4,462.5 703.1,456.9 698.6,453.4" fill="#b9b9b9"/>
<polygon points="825.8,469.9 830.6,467 834.3,463.8 829.2,466.9" fill="#a1a1a1"/>
<polygon points="819.3,435.9 822.8,433.3 817,433.7 813.9,436" fill="#e6e6e6"/>
<polygon points="840.3,454.8 844.4,451.1 842.9,444.4 838.9,447.9" fill="#a2a2a2"/>
<polygon points="829.1,436 832.6,433 825.9,430.6 822.8,433.3" fill="#ebebeb"/>
<polygon points="834.3,463.8 838.9,460.5 840.3,454.8 835.6,458.2" fill="#a1a1a1"/>
<polygon points="696.2,442.9 700,446.5 704.1,439.9 700.5,436.5" fill="#ffffff"/>
<polygon points="700.5,436.5 704.1,439.9 710,434.8 706.7,431.7" fill="#ffffff"/>
<polygon points="719.9,434.9 723.6,437.4 728.7,437.3 725.4,435.1" fill="#cacaca"/>
<polygon points="712.9,468.7 717.9,471.5 714.7,468.6 709.3,465.7" fill="#a1a1a1"/>
<polygon points="838.9,447.9 842.9,444.4 838.7,437.9 834.9,441.2" fill="#bebebe"/>
<polygon points="834.9,441.2 838.7,437.9 832.6,433 829.1,436" fill="#d6d6d6"/>
<polygon points="710,434.8 713.8,437.8 719.9,434.9 716.5,432.3" fill="#ebebeb"/>
<polygon points="815.4,438.3 819.3,435.9 813.9,436 810.4,438.1" fill="#e4e4e4"/>
<polygon points="698.6,453.4 703.1,456.9 704.4,450 700,446.5" fill="#d6d6d6"/>
<polygon points="820.5,472.5 825.8,469.9 829.2,466.9 823.6,469.7" fill="#a1a1a1"/>
<polygon points="704.4,462.5 709.3,465.7 708.1,460.1 703.1,456.9" fill="#b9b9b9"/>
<polygon points="825.2,438.9 829.1,436 822.8,433.3 819.3,435.9" fill="#ebebeb"/>
<polygon points="723.6,437.4 727.7,439.6 732.4,439.3 728.7,437.3" fill="#cacaca"/>
<polygon points="835.6,458.2 840.3,454.8 838.9,447.9 834.3,451.3" fill="#a5a5a5"/>
<polygon points="829.2,466.9 834.3,463.8 835.6,458.2 830.4,461.4" fill="#a1a1a1"/>
<polygon points="704.1,439.9 708.3,443.1 713.8,437.8 710,434.8" fill="#ffffff"/>
<polygon points="700,446.5 704.4,450 708.3,443.1 704.1,439.9" fill="#ffffff"/>
<polygon points="717.9,471.5 723.4,474 720.5,471.3 714.7,468.6" fill="#a1a1a1"/>
<polygon points="811.1,440.4 815.4,438.3 810.4,438.1 806.7,440" fill="#e1e1e1"/>
<polygon points="713.8,437.8 718,440.5 723.6,437.4 719.9,434.9" fill="#ebebeb"/>
<polygon points="830.6,444.4 834.9,441.2 829.1,436 825.2,438.9" fill="#d8d8d8"/>
<polygon points="814.9,474.9 820.5,472.5 823.6,469.7 817.7,472.3" fill="#a1a1a1"/>
<polygon points="834.3,451.3 838.9,447.9 834.9,441.2 830.6,444.4" fill="#c1c1c1"/>
<polygon points="727.7,439.6 732.2,441.6 736.3,441.1 732.4,439.3" fill="#cbcbcb"/>
<polygon points="709.3,465.7 714.7,468.6 713.6,463.1 708.1,460.1" fill="#b8b8b8"/>
<polygon points="703.1,456.9 708.1,460.1 709.3,453.2 704.4,450" fill="#d6d6d6"/>
<polygon points="820.8,441.6 825.2,438.9 819.3,435.9 815.4,438.3" fill="#ebebeb"/>
<polygon points="806.6,442.4 811.1,440.4 806.7,440 802.6,441.8" fill="#dedede"/>
<polygon points="723.4,474 729.2,476.2 726.7,473.6 720.5,471.3" fill="#a1a1a1"/>
<polygon points="823.6,469.7 829.2,466.9 830.4,461.4 824.7,464.2" fill="#a1a1a1"/>
<polygon points="708.3,443.1 712.9,446.2 718,440.5 713.8,437.8" fill="#ffffff"/>
<polygon points="830.4,461.4 835.6,458.2 834.3,451.3 829.2,454.4" fill="#a9a9a9"/>
<polygon points="718,440.5 722.6,443 727.7,439.6 723.6,437.4" fill="#ebebeb"/>
<polygon points="732.2,441.6 736.9,443.4 740.5,442.7 736.3,441.1" fill="#cbcbcb"/>
<polygon points="704.4,450 709.3,453.2 712.9,446.2 708.3,443.1" fill="#ffffff"/>
<polygon points="809,477 814.9,474.9 817.7,472.3 811.4,474.5" fill="#a1a1a1"/>
<polygon points="801.7,444.1 806.6,442.4 802.6,441.8 798.3,443.3" fill="#dcdcdc"/>
<polygon points="825.8,447.3 830.6,444.4 825.2,438.9 820.8,441.6" fill="#dadada"/>
<polygon points="816.1,444 820.8,441.6 815.4,438.3 811.1,440.4" fill="#ebebeb"/>
<polygon points="829.2,454.4 834.3,451.3 830.6,444.4 825.8,447.3" fill="#c3c3c3"/>
<polygon points="714.7,468.6 720.5,471.3 719.5,465.8 713.6,463.1" fill="#b8b8b8"/>
<polygon points="729.2,476.2 735.3,478.2 733.1,475.7 726.7,473.6" fill="#a1a1a1"/>
<polygon points="708.1,460.1 713.6,463.1 714.7,456.1 709.3,453.2" fill="#d6d6d6"/>
<polygon points="736.9,443.4 741.9,445 745,444.1 740.5,442.7" fill="#cccccc"/>
<polygon points="796.7,445.6 801.7,444.1 798.3,443.3 793.8,444.6" fill="#dadada"/>
<polygon points="802.8,478.8 809,477 811.4,474.5 804.8,476.4" fill="#a1a1a1"/>
<polygon points="722.6,443 727.5,445.3 732.2,441.6 727.7,439.6" fill="#ebebeb"/>
<polygon points="817.7,472.3 823.6,469.7 824.7,464.2 818.7,466.8" fill="#a1a1a1"/>
<polygon points="712.9,446.2 717.9,448.9 722.6,443 718,440.5" fill="#ffffff"/>
<polygon points="824.7,464.2 830.4,461.4 829.2,454.4 823.6,457.2" fill="#acacac"/>
<polygon points="741.9,445 747.1,446.3 749.6,445.3 745,444.1" fill="#cccccc"/>
<polygon points="709.3,453.2 714.7,456.1 717.9,448.9 712.9,446.2" fill="#fefefe"/>
<polygon points="811,446.2 816.1,444 811.1,440.4 806.6,442.4" fill="#ebebeb"/>
<polygon points="735.3,478.2 741.7,479.8 739.9,477.4 733.1,475.7" fill="#a1a1a1"/>
<polygon points="791.4,446.8 796.7,445.6 793.8,444.6 789.1,445.7" fill="#d8d8d8"/>
<polygon points="820.5,450 825.8,447.3 820.8,441.6 816.1,444" fill="#dcdcdc"/>
<polygon points="720.5,471.3 726.7,473.6 725.7,468.2 719.5,465.8" fill="#b7b7b7"/>
<polygon points="796.3,480.3 802.8,478.8 804.8,476.4 797.9,478" fill="#a1a1a1"/>
<polygon points="747.1,446.3 752.4,447.3 754.4,446.2 749.6,445.3" fill="#cdcdcd"/>
<polygon points="823.6,457.2 829.2,454.4 825.8,447.3 820.5,450" fill="#c6c6c6"/>
<polygon points="727.5,445.3 732.8,447.3 736.9,443.4 732.2,441.6" fill="#ebebeb"/>
<polygon points="713.6,463.1 719.5,465.8 720.5,458.8 714.7,456.1" fill="#d5d5d5"/>
<polygon points="786,447.7 791.4,446.8 789.1,445.7 784.3,446.5" fill="#d6d6d6"/>
<polygon points="811.4,474.5 817.7,472.3 818.7,466.8 812.2,469.1" fill="#a1a1a1"/>
<polygon points="741.7,479.8 748.3,481 746.9,478.7 739.9,477.4" fill="#a1a1a1"/>
<polygon points="752.4,447.3 757.9,448.1 759.3,446.9 754.4,446.2" fill="#cecece"/>
<polygon points="717.9,448.9 723.4,451.4 727.5,445.3 722.6,443" fill="#ffffff"/>
<polygon points="805.6,448.1 811,446.2 806.6,442.4 801.7,444.1" fill="#ebebeb"/>
<polygon points="780.4,448.3 786,447.7 784.3,446.5 779.3,447.1" fill="#d5d5d5"/>
<polygon points="789.6,481.5 796.3,480.3 797.9,478 790.8,479.2" fill="#a1a1a1"/>
<polygon points="818.7,466.8 824.7,464.2 823.6,457.2 817.7,459.7" fill="#afafaf"/>
<polygon points="757.9,448.1 763.5,448.6 764.3,447.3 759.3,446.9" fill="#cfcfcf"/>
<polygon points="774.8,448.7 780.4,448.3 779.3,447.1 774.3,447.4" fill="#d3d3d3"/>
<polygon points="714.7,456.1 720.5,458.8 723.4,451.4 717.9,448.9" fill="#fbfbfb"/>
<polygon points="763.5,448.6 769.2,448.8 769.3,447.5 764.3,447.3" fill="#d0d0d0"/>
<polygon points="769.2,448.8 774.8,448.7 774.3,447.4 769.3,447.5" fill="#d2d2d2"/>
<polygon points="814.9,452.4 820.5,450 816.1,444 811,446.2" fill="#dedede"/>
<polygon points="748.3,481 755.1,482 754.1,479.7 746.9,478.7" fill="#a1a1a1"/>
<polygon points="726.7,473.6 733.1,475.7 732.4,470.3 725.7,468.2" fill="#b5b5b5"/>
<polygon points="732.8,447.3 738.4,449.1 741.9,445 736.9,443.4" fill="#ebebeb"/>
<polygon points="782.8,482.3 789.6,481.5 790.8,479.2 783.6,480" fill="#a1a1a1"/>
<polygon points="755.1,482 762,482.6 761.4,480.4 754.1,479.7" fill="#a1a1a1"/>
<polygon points="817.7,459.7 823.6,457.2 820.5,450 814.9,452.4" fill="#c9c9c9"/>
<polygon points="799.9,449.7 805.6,448.1 801.7,444.1 796.7,445.6" fill="#ebebeb"/>
<polygon points="804.8,476.4 811.4,474.5 812.2,469.1 805.5,471.1" fill="#a1a1a1"/>
<polygon points="719.5,465.8 725.7,468.2 726.7,461.1 720.5,458.8" fill="#d4d4d4"/>
<polygon points="775.9,482.7 782.8,482.3 783.6,480 776.2,480.5" fill="#a1a1a1"/>
<polygon points="762,482.6 768.9,482.8 768.8,480.6 761.4,480.4" fill="#a1a1a1"/>
<polygon points="723.4,451.4 729.2,453.7 732.8,447.3 727.5,445.3" fill="#ffffff"/>
<polygon points="768.9,482.8 775.9,482.7 776.2,480.5 768.8,480.6" fill="#a1a1a1"/>
<polygon points="738.4,449.1 744.2,450.6 747.1,446.3 741.9,445" fill="#ebebeb"/>
<polygon points="812.2,469.1 818.7,466.8 817.7,459.7 811.4,462" fill="#b2b2b2"/>
<polygon points="733.1,475.7 739.9,477.4 739.3,472.1 732.4,470.3" fill="#b4b4b4"/>
<polygon points="809,454.5 814.9,452.4 811,446.2 805.6,448.1" fill="#e0e0e0"/>
<polygon points="794,451.1 799.9,449.7 796.7,445.6 791.4,446.8" fill="#ebebeb"/>
<polygon points="720.5,458.8 726.7,461.1 729.2,453.7 723.4,451.4" fill="#f8f8f8"/>
<polygon points="797.9,478 804.8,476.4 805.5,471.1 798.5,472.7" fill="#a1a1a1"/>
<polygon points="744.2,450.6 750.3,451.7 752.4,447.3 747.1,446.3" fill="#ebebeb"/>
<polygon points="811.4,462 817.7,459.7 814.9,452.4 809,454.5" fill="#cbcbcb"/>
<polygon points="725.7,468.2 732.4,470.3 733.1,463.1 726.7,461.1" fill="#d2d2d2"/>
<polygon points="729.2,453.7 735.3,455.6 738.4,449.1 732.8,447.3" fill="#ffffff"/>
<polygon points="787.9,452.1 794,451.1 791.4,446.8 786,447.7" fill="#ebebeb"/>
<polygon points="739.9,477.4 746.9,478.7 746.5,473.4 739.3,472.1" fill="#b2b2b2"/>
<polygon points="750.3,451.7 756.4,452.6 757.9,448.1 752.4,447.3" fill="#ebebeb"/>
<polygon points="802.8,456.3 809,454.5 805.6,448.1 799.9,449.7" fill="#e3e3e3"/>
<polygon points="805.5,471.1 812.2,469.1 811.4,462 804.8,463.9" fill="#b6b6b6"/>
<polygon points="790.8,479.2 797.9,478 798.5,472.7 791.2,473.9" fill="#a1a1a1"/>
<polygon points="781.7,452.8 787.9,452.1 786,447.7 780.4,448.3" fill="#ebebeb"/>
<polygon points="726.7,461.1 733.1,463.1 735.3,455.6 729.2,453.7" fill="#f4f4f4"/>
<polygon points="756.4,452.6 762.7,453.1 763.5,448.6 757.9,448.1" fill="#ebebeb"/>
<polygon points="746.9,478.7 754.1,479.7 753.8,474.5 746.5,473.4" fill="#b0b0b0"/>
<polygon points="775.4,453.2 781.7,452.8 780.4,448.3 774.8,448.7" fill="#ebebeb"/>
<polygon points="762.7,453.1 769,453.3 769.2,448.8 763.5,448.6" fill="#ebebeb"/>
<polygon points="735.3,455.6 741.7,457.2 744.2,450.6 738.4,449.1" fill="#ffffff"/>
<polygon points="769,453.3 775.4,453.2 774.8,448.7 769.2,448.8" fill="#ebebeb"/>
<polygon points="783.6,480 790.8,479.2 791.2,473.9 783.8,474.8" fill="#a3a3a3"/>
<polygon points="732.4,470.3 739.3,472.1 739.9,464.9 733.1,463.1" fill="#d0d0d0"/>
<polygon points="804.8,463.9 811.4,462 809,454.5 802.8,456.3" fill="#cecece"/>
<polygon points="754.1,479.7 761.4,480.4 761.3,475.1 753.8,474.5" fill="#aeaeae"/>
<polygon points="796.3,457.7 802.8,456.3 799.9,449.7 794,451.1" fill="#e6e6e6"/>
<polygon points="776.2,480.5 783.6,480 783.8,474.8 776.3,475.3" fill="#a6a6a6"/>
<polygon points="798.5,472.7 805.5,471.1 804.8,463.9 797.9,465.4" fill="#b9b9b9"/>
<polygon points="761.4,480.4 768.8,480.6 768.8,475.4 761.3,475.1" fill="#ababab"/>
<polygon points="768.8,480.6 776.2,480.5 776.3,475.3 768.8,475.4" fill="#a9a9a9"/>
<polygon points="733.1,463.1 739.9,464.9 741.7,457.2 735.3,455.6" fill="#f0f0f0"/>
<polygon points="741.7,457.2 748.3,458.5 750.3,451.7 744.2,450.6" fill="#ffffff"/>
<polygon points="739.3,472.1 746.5,473.4 746.9,466.2 739.9,464.9" fill="#cecece"/>
<polygon points="789.6,458.9 796.3,457.7 794,451.1 787.9,452.1" fill="#e9e9e9"/>
<polygon points="797.9,465.4 804.8,463.9 802.8,456.3 796.3,457.7" fill="#d1d1d1"/>
<polygon points="791.2,473.9 798.5,472.7 797.9,465.4 790.8,466.6" fill="#bcbcbc"/>
<polygon points="748.3,458.5 755.1,459.4 756.4,452.6 750.3,451.7" fill="#ffffff"/>
<polygon points="739.9,464.9 746.9,466.2 748.3,458.5 741.7,457.2" fill="#ececec"/>
<polygon points="782.8,459.7 789.6,458.9 787.9,452.1 781.7,452.8" fill="#ececec"/>
<polygon points="746.5,473.4 753.8,474.5 754.1,467.2 746.9,466.2" fill="#cccccc"/>
<polygon points="755.1,459.4 762,460 762.7,453.1 756.4,452.6" fill="#fcfcfc"/>
<polygon points="790.8,466.6 797.9,465.4 796.3,457.7 789.6,458.9" fill="#d4d4d4"/>
<polygon points="783.8,474.8 791.2,473.9 790.8,466.6 783.6,467.5" fill="#bfbfbf"/>
<polygon points="775.9,460.1 782.8,459.7 781.7,452.8 775.4,453.2" fill="#f0f0f0"/>
<polygon points="762,460 768.9,460.2 769,453.3 762.7,453.1" fill="#f8f8f8"/>
<polygon points="768.9,460.2 775.9,460.1 775.4,453.2 769,453.3" fill="#f4f4f4"/>
<polygon points="753.8,474.5 761.3,475.1 761.4,467.8 754.1,467.2" fill="#cacaca"/>
<polygon points="746.9,466.2 754.1,467.2 755.1,459.4 748.3,458.5" fill="#e8e8e8"/>
<polygon points="776.3,475.3 783.8,474.8 783.6,467.5 776.2,468" fill="#c2c2c2"/>
<polygon points="761.3,475.1 768.8,475.4 768.8,468.1 761.4,467.8" fill="#c7c7c7"/>
<polygon points="783.6,467.5 790.8,466.6 789.6,458.9 782.8,459.7" fill="#d7d7d7"/>
<polygon points="768.8,475.4 776.3,475.3 776.2,468 768.8,468.1" fill="#c5c5c5"/>
<polygon points="754.1,467.2 761.4,467.8 762,460 755.1,459.4" fill="#e4e4e4"/>
<polygon points="776.2,468 783.6,467.5 782.8,459.7 775.9,460.1" fill="#dadada"/>
<polygon points="761.4,467.8 768.8,468.1 768.9,460.2 762,460" fill="#e1e1e1"/>
<polygon points="768.8,468.1 776.2,468 775.9,460.1 768.9,460.2" fill="#dddddd"/>
</g>
<polygon points="672.7,425.5 698.9,491.9 638.9,550.2 611.8,483.4" fill="#9a9a9a"/>
<polygon points="611.8,483.4 638.9,550.2 611.8,540.9" fill="#b8b8b8"/>
<path d="M611.8 483.4L638.9 550.2M611.8 483.4L672.7 425.5M632.1 464.1L658.9 530.8M620.8 505.7L681.4 447.6M652.4 444.8L678.9 511.3M629.9 527.9L690.2 469.8M672.7 425.5L698.9 491.9M638.9 550.2L698.9 491.9M611.8 489.8L614.8 490.8M614.8 541.9L614.8 490.8M611.8 496.2L617.8 498.2M617.8 543L617.8 498.2M611.8 502.6L620.8 505.7M620.8 544L620.8 505.7M611.8 509L623.8 513.1M623.8 545L623.8 513.1M611.8 515.3L626.9 520.5M626.9 546.1L626.9 520.5M611.8 521.7L629.9 527.9M629.9 547.1L629.9 527.9M611.8 528.1L632.9 535.4M632.9 548.1L632.9 535.4M611.8 534.5L635.9 542.8M635.9 549.2L635.9 542.8" stroke="#fff" stroke-width="1" fill="none"/>
<polygon points="672.7,425.5 698.9,491.9 638.9,550.2 611.8,540.9 611.8,483.4" fill="none" stroke="#fff" stroke-width="1.6" stroke-linejoin="round"/>
<g stroke="#fff" stroke-width="1" stroke-linejoin="round">
<polygon points="613.4,583.6 598.3,592 572.9,607.4 599,592.8" fill="#b0b0b0"/>
<polygon points="668.4,592.7 653.9,584 669.1,593.5 694.4,608.6" fill="#808080"/>
<polygon points="552,660.5 562.2,684 571.6,714 562.9,693.6" fill="#8e8e8e"/>
<polygon points="702.4,685.4 714,662.1 703.1,695.1 693.1,715.2" fill="#808080"/>
<polygon points="596.9,729.1 631.8,734.9 632.3,742 612.1,738.6" fill="#5e5e5e"/>
<polygon points="631.8,734.9 667,729.8 652.6,739 632.3,742" fill="#666666"/>
<polygon points="598.3,592 592.5,603.6 562.9,627.5 572.9,607.4" fill="#c4c4c4"/>
<polygon points="673.5,604.5 668.4,592.7 694.4,608.6 703.1,629" fill="#787878"/>
<polygon points="562.9,627.5 571.6,647.9 562.2,684 552,660.5" fill="#bcbcbc"/>
<polygon points="633,595.2 613.4,583.6 633.7,580.6" fill="#b8b8b8"/>
<polygon points="633,595.2 633.7,580.6 653.9,584" fill="#a8a8a8"/>
<polygon points="693.1,649.1 703.1,629 714,662.1 702.4,685.4" fill="#9a9a9a"/>
<polygon points="562.2,684 591.3,701.4 596.9,729.1 571.6,714" fill="#8a8a8a"/>
<polygon points="672.3,702.2 702.4,685.4 693.1,715.2 667,729.8" fill="#929292"/>
<polygon points="633,595.2 598.3,592 613.4,583.6" fill="#c4c4c4"/>
<polygon points="633,595.2 653.9,584 668.4,592.7" fill="#a2a2a2"/>
<polygon points="633,595.2 592.5,603.6 598.3,592" fill="#cecece"/>
<polygon points="633,595.2 668.4,592.7 673.5,604.5" fill="#9c9c9c"/>
<polygon points="592.5,603.6 597.6,615.4 571.6,647.9 562.9,627.5" fill="#d4d4d4"/>
<polygon points="667.7,616.1 673.5,604.5 703.1,629 693.1,649.1" fill="#8c8c8c"/>
<polygon points="591.3,701.4 631.6,708.1 631.8,734.9 596.9,729.1" fill="#7e7e7e"/>
<polygon points="631.6,708.1 672.3,702.2 667,729.8 631.8,734.9" fill="#868686"/>
<polygon points="633,595.2 597.6,615.4 592.5,603.6" fill="#d6d6d6"/>
<polygon points="633,595.2 673.5,604.5 667.7,616.1" fill="#a0a0a0"/>
<polygon points="571.6,647.9 596.9,663 591.3,701.4 562.2,684" fill="#c4c4c4"/>
<polygon points="633,595.2 612.1,624.1 597.6,615.4" fill="#d4d4d4"/>
<polygon points="633,595.2 667.7,616.1 652.6,624.5" fill="#a8a8a8"/>
<polygon points="667,663.7 693.1,649.1 702.4,685.4 672.3,702.2" fill="#cecece"/>
<polygon points="633,595.2 632.3,627.4 612.1,624.1" fill="#cacaca"/>
<polygon points="633,595.2 652.6,624.5 632.3,627.4" fill="#b6b6b6"/>
<polygon points="597.6,615.4 612.1,624.1 596.9,663 571.6,647.9" fill="#ffffff"/>
<polygon points="652.6,624.5 667.7,616.1 693.1,649.1 667,663.7" fill="#a8a8a8"/>
<polygon points="596.9,663 631.8,668.8 631.6,708.1 591.3,701.4" fill="#b6b6b6"/>
<polygon points="631.8,668.8 667,663.7 672.3,702.2 631.6,708.1" fill="#c2c2c2"/>
<polygon points="612.1,624.1 632.3,627.4 631.8,668.8 596.9,663" fill="#ffffff"/>
<polygon points="632.3,627.4 652.6,624.5 667,663.7 631.8,668.8" fill="#c8c8c8"/>
</g>
<g fill="none" stroke-width="1.150">
<path d="M532.5 512V674" stroke="#6666e8"/>
<path d="M499.9 651.7L599.6 556.5" stroke="#56cc56"/>
<path d="M477.8 601.4L645.6 657.7" stroke="#e26464"/>
<rect x="529.5" y="616.5" width="6" height="6" fill="#212830" stroke="#fff" stroke-width="1.2"/>
</g>
<polygon points="1008.7,404.2 1148.7,451.5 1064.8,531.3 925.2,484" fill="#b8b8b8"/>
<polygon points="925.2,484 1064.8,531.3 1064.8,664.5 925.2,617.2" fill="#8f8f8f"/>
<polygon points="1064.8,531.3 1148.7,451.5 1148.7,585.6 1064.8,664.5" fill="#9a9a9a"/>
<path d="M925.2 484L1064.8 531.3M925.2 484L1008.7 404.2M925.2 484L925.2 617.2M925.2 484L1064.8 531.3M1064.8 531.3L1064.8 664.5M1064.8 531.3L1148.7 451.5M946.1 464.1L1085.8 511.3M960.1 495.8L1043.7 416M960.1 495.8L960.1 629M925.2 517.3L1064.8 564.6M1085.8 511.3L1085.8 644.8M1064.8 564.6L1148.7 485M967 444.1L1106.8 491.4M995 507.6L1078.7 427.9M995 507.6L995 640.9M925.2 550.6L1064.8 597.9M1106.8 491.4L1106.8 625M1064.8 597.9L1148.7 518.5M987.8 424.1L1127.7 471.4M1029.9 519.5L1113.7 439.7M1029.9 519.5L1029.9 652.7M925.2 583.9L1064.8 631.2M1127.7 471.4L1127.7 605.3M1064.8 631.2L1148.7 552.1M1008.7 404.2L1148.7 451.5M1064.8 531.3L1148.7 451.5M1064.8 531.3L1064.8 664.5M925.2 617.2L1064.8 664.5M1148.7 451.5L1148.7 585.6M1064.8 664.5L1148.7 585.6" stroke="#fff" stroke-width="1.1" fill="none"/>
<polygon points="1008.7,404.2 1148.7,451.5 1148.7,585.6 1064.8,664.5 925.2,617.2 925.2,484" fill="none" stroke="#fff" stroke-width="1.6" stroke-linejoin="round"/>
<polygon points="1397.1,294.6 1478.2,438.3 1469.2,476" fill="#8a8a8a"/>
<polygon points="1397.1,294.6 1469.2,476 1417.4,497.8" fill="#f4f4f4"/>
<polygon points="1397.1,294.6 1417.4,497.8 1354.6,492.4" fill="#bebebe"/>
<polygon points="1397.1,294.6 1354.6,492.4 1302.6,456.7" fill="#cacaca"/>
<path d="M1397.1 294.6L1478.2 438.3M1397.1 294.6L1469.2 476M1397.1 294.6L1417.4 497.8M1397.1 294.6L1354.6 492.4M1397.1 294.6L1302.6 456.7M1424.1 342.5L1421.1 355.1M1421.1 355.1L1403.9 362.3M1403.9 362.3L1382.9 360.5M1382.9 360.5L1365.6 348.6M1451.2 390.4L1445.2 415.5M1445.2 415.5L1410.6 430.1M1410.6 430.1L1368.8 426.5M1368.8 426.5L1334.1 402.7M1478.2 438.3L1469.2 476M1469.2 476L1417.4 497.8M1417.4 497.8L1354.6 492.4M1354.6 492.4L1302.6 456.7" stroke="#fff" stroke-width="1" fill="none"/>
<polyline points="1302.6,456.7 1397.1,294.6 1478.2,438.3 1469.2,476 1417.4,497.8 1354.6,492.4" fill="none" stroke="#fff" stroke-width="1.6" stroke-linejoin="round"/>
<polygon points="1271.8,298.5 1334,303.6 1370.6,332.8 1361.5,367.7 1311.4,388.7 1250.1,384 1212.8,354.9 1221.4,320" fill="#b9b9b9"/>
<polygon points="1212.8,354.9 1250.1,384 1250.1,635.8 1212.8,606.7" fill="#a0a0a0"/>
<polygon points="1250.1,384 1311.4,388.7 1311.4,640.5 1250.1,635.8" fill="#8c8c8c"/>
<polygon points="1311.4,388.7 1361.5,367.7 1361.5,619.5 1311.4,640.5" fill="#adadad"/>
<polygon points="1361.5,367.7 1370.6,332.8 1370.6,584.6 1361.5,619.5" fill="#8a8a8a"/>
<path d="M1291.6 343.6L1271.8 298.5M1291.6 343.6L1334 303.6M1291.6 343.6L1370.6 332.8M1291.6 343.6L1361.5 367.7M1291.6 343.6L1311.4 388.7M1291.6 343.6L1250.1 384M1291.6 343.6L1212.8 354.9M1291.6 343.6L1221.4 320M1285 328.6L1305.7 330.3M1305.7 330.3L1317.9 340M1317.9 340L1314.9 351.6M1314.9 351.6L1298.2 358.6M1298.2 358.6L1277.8 357.1M1277.8 357.1L1265.3 347.4M1265.3 347.4L1268.2 335.7M1268.2 335.7L1285 328.6M1278.4 313.5L1319.9 316.9M1319.9 316.9L1344.3 336.4M1344.3 336.4L1338.2 359.7M1338.2 359.7L1304.8 373.7M1304.8 373.7L1263.9 370.5M1263.9 370.5L1239.1 351.1M1239.1 351.1L1244.8 327.9M1244.8 327.9L1278.4 313.5M1271.8 298.5L1334 303.6M1334 303.6L1370.6 332.8M1370.6 332.8L1361.5 367.7M1361.5 367.7L1311.4 388.7M1311.4 388.7L1250.1 384M1250.1 384L1212.8 354.9M1212.8 354.9L1221.4 320M1221.4 320L1271.8 298.5M1212.8 354.9L1212.8 606.7M1250.1 384L1250.1 635.8M1311.4 388.7L1311.4 640.5M1361.5 367.7L1361.5 619.5M1370.6 332.8L1370.6 584.6M1212.8 438.8L1250.1 467.9M1250.1 467.9L1311.4 472.6M1311.4 472.6L1361.5 451.6M1361.5 451.6L1370.6 416.7M1212.8 522.8L1250.1 551.9M1250.1 551.9L1311.4 556.6M1311.4 556.6L1361.5 535.6M1361.5 535.6L1370.6 500.7M1212.8 606.7L1250.1 635.8M1250.1 635.8L1311.4 640.5M1311.4 640.5L1361.5 619.5M1361.5 619.5L1370.6 584.6" stroke="#fff" stroke-width="1" fill="none"/>
<polygon points="1212.8,354.9 1221.4,320 1271.8,298.5 1334,303.6 1370.6,332.8 1370.6,584.6 1361.5,619.5 1311.4,640.5 1250.1,635.8 1212.8,606.7" fill="none" stroke="#fff" stroke-width="1.5" stroke-linejoin="round"/>
<path d="M1590.600 233.500L1571.400 251.400 1590.600 314.900z" fill="#d2d2d2"/><path d="M1590.600 233.500L1571.400 251.400 1590.600 314.900" fill="none" stroke="#fff" stroke-width="1.600" stroke-linejoin="round"/>
<text x="537.500" y="516" font-family="'Liberation Sans',sans-serif" font-size="11" fill="#6e8ecb">Z</text>
<text x="601.500" y="571" font-family="'Liberation Sans',sans-serif" font-size="11" fill="#45b545">Y</text>
<text x="647.600" y="671.800" font-family="'Liberation Sans',sans-serif" font-size="9.500" font-weight="bold" fill="#1c1a14" stroke="#1c1a14" stroke-width="1.100">X</text><text x="647.600" y="671.800" font-family="'Liberation Sans',sans-serif" font-size="9.500" font-weight="bold" fill="#c9a13f">X</text>
<g stroke-linecap="round"><path d="M925.800 616.800L966.500 630.200" stroke="#a04a4a" stroke-width="4.600"/><path d="M925.800 616.300L966.500 629.600" stroke="#f08a8a" stroke-width="2.400"/>
<path d="M927 614.500L950.800 593.200" stroke="#2d7d2d" stroke-width="5.200"/><path d="M926.600 613.600L950.200 592.500" stroke="#46a046" stroke-width="2.600"/>
<path d="M925.600 615.800V578.500" stroke="#3a5ea8" stroke-width="4.400"/><path d="M925.200 615.800V578.500" stroke="#6a92dc" stroke-width="2"/></g>
<path d="M924.500 561.800h10l-9.800 11.600h10.400" fill="none" stroke="#4a86e8" stroke-width="1.200"/>
<path d="M948.500 576.800l5 6.600 5.800-6.800M953.500 583.400v6.400" fill="none" stroke="#3fae3f" stroke-width="1.200"/>
<path d="M965.500 615.500l10.500 11M976 615.500l-10.500 11" fill="none" stroke="#d84848" stroke-width="1.200"/>
<g opacity=".995">
<ellipse cx="1514.300" cy="302" rx="44" ry="24" fill="#171c22" opacity=".55"/>
<path d="M1455.600 300.500a58.700 35.600 0 1 0 117.400 0a58.700 35.600 0 1 0-117.400 0zM1467.900 298.500a46.600 26.400 0 1 1 93.200 0a46.600 26.400 0 1 1-93.200 0z" fill="#464d57" fill-rule="evenodd"/>
<path d="M1507.300 239.700l36.400 11.200-21 20.900-39.900-12.600z" fill="#bcbfc3"/>
<path d="M1482.800 259.200l39.900 12.600-.7 37.100-37.100-14.700z" fill="#b1b4b8"/>
<path d="M1522.700 271.800l21-20.900-1.400 35.600-20.300 22.400z" fill="#a5a8ad"/>
<path d="M1511.500 266.500l11.200 3.800 4.200-4.600v9.800l-4.400 4.800-11-3.800z" fill="#c6cace" opacity=".8"/>
<path d="M1482.800 259.200l39.900 12.600 21-20.900M1522.700 271.800l-.7 37.100" fill="none" stroke="#3c424b" stroke-width=".9" stroke-dasharray="4 2"/>
<text transform="translate(1514.300 257.800) rotate(17) skewX(-18)" text-anchor="middle" font-family="'Liberation Sans',sans-serif" font-size="7.600" font-weight="bold" fill="#4a515c">GÓRA</text>
<text transform="translate(1502.600 287.200) rotate(18.500)" text-anchor="middle" font-family="'Liberation Sans',sans-serif" font-size="8.600" font-weight="bold" fill="#4a515c">PRZÓD</text>
<text transform="translate(1534.400 283.200) rotate(-47) skewX(-10)" text-anchor="middle" font-family="'Liberation Sans',sans-serif" font-size="6.600" font-weight="bold" fill="#4a515c">PRAWO</text>
<text transform="translate(1470.300 281.500) rotate(-28)" text-anchor="middle" font-family="'Liberation Sans',sans-serif" font-size="10" font-weight="bold" font-style="italic" fill="#aeb1b5">N</text>
<text transform="translate(1564.500 317.500) rotate(-22)" text-anchor="middle" font-family="'Liberation Sans',sans-serif" font-size="12" font-weight="bold" font-style="italic" fill="#aeb1b5">W</text>
<text transform="translate(1479.500 332.500) rotate(21)" text-anchor="middle" font-family="'Liberation Sans',sans-serif" font-size="12" font-weight="bold" font-style="italic" fill="#aeb1b5">PD</text>
</g>
<path d="M1530 190h9.800" stroke="#fff" stroke-width="2.400"/><path d="M1551.800 183.600h7.400v6.400M1549.800 186h7v6.400h-7z" fill="none" stroke="#fff" stroke-width="1.500"/><path d="M1570.300 184.300l8 7.400M1578.300 184.300l-8 7.400" stroke="#fff" stroke-width="2.200"/>
</svg>
<div id="titlebar"></div>
<div id="qat"></div><div id="wsbox"></div>
<div id="info"></div><div id="search"></div>
<div id="winbtn"><i style="left:26px"></i><i style="left:53px"></i></div>
<div id="tabrow"></div><div id="acttab"></div>
<div id="appbtn"></div>
<div id="ribbon"></div><div id="ribright"></div>
<div class="pnl" style="left:1.3px;width:145.700px"><b></b></div>
<div class="pnl" style="left:148px;width:340px"><b></b></div>
<div class="pnl" style="left:489px;width:209px"><b></b></div>
<div class="pnl" style="left:699px;width:288px"><b></b></div>
<div class="pnl" style="left:988.5px;width:202px"><b></b></div>
<div class="pnl" style="left:1192px;width:225px"><b></b></div>
<div class="vsep" style="left:352px;top:49px;height:72px"></div>
<div id="elim"></div>
<div id="ribline"></div>
<div id="filebar"></div><div id="fileband"></div>
<div id="props"></div>
<div id="navbar"></div><div id="guw"></div>
<div id="rstripe"></div>
<div id="cmdl"></div><div id="cmdr"></div>
<div id="status"></div>
<div class="sb" style="left:617px;width:182px"></div>
<div class="sb" style="left:800px;width:49px"></div>
<div class="sb" style="left:850px;width:65px"></div>
<div class="sb" style="left:917px;width:24px"></div>
<div class="sb" style="left:942px;width:25px"></div>
<div class="sb" style="left:967px;width:102px"></div>
<div class="sb" style="left:1070px;width:63px"></div>
<div class="sb" style="left:1134px;width:39px"></div>
<div class="sb" style="left:1174px;width:24px"></div>
<div class="sb" style="left:1199px;width:39px"></div>
<div class="sb" style="left:1241px;width:152px"></div>
<div class="sb" style="left:1394px;width:41px"></div>
<div class="sb" style="left:1435px;width:26px"></div>
<div class="sb" style="left:1462px;width:26px"></div>
<div class="sb" style="left:1489px;width:25px"></div>
<div class="sb" style="left:1516px;width:31px"></div>
<div class="sb" style="left:1548.5px;width:49.5px"></div>

<svg class="ic" width="0" height="0" style="left:0;top:0"><defs>
<linearGradient id="gw" x1="0" y1="0" x2="0" y2="1"><stop offset="0" stop-color="#ffffff"/><stop offset="1" stop-color="#c9ccd2"/></linearGradient>
<linearGradient id="gw2" x1="0" y1="0" x2="1" y2="1"><stop offset="0" stop-color="#ffffff"/><stop offset="1" stop-color="#b8bcc4"/></linearGradient>
<linearGradient id="gb" x1="0" y1="0" x2="0" y2="1"><stop offset="0" stop-color="#d6e6fa"/><stop offset="1" stop-color="#9cbdea"/></linearGradient>
<radialGradient id="gs" cx="0.4" cy="0.3" r="0.75"><stop offset="0" stop-color="#ffffff"/><stop offset="0.6" stop-color="#e2e4e8"/><stop offset="1" stop-color="#9da1a9"/></radialGradient>
<linearGradient id="gred" x1="0" y1="0" x2="1" y2="1"><stop offset="0" stop-color="#e83030"/><stop offset="1" stop-color="#b01212"/></linearGradient>
</defs></svg>
<svg class="ic" style="left:0px;top:0px" width="40" height="41" viewBox="0 0 40 41"><path d="M15.6 5.2L27 27.4l-1 3.2h-5.4l-1.4-3.6-3.6-2.2-4.2 2.4-1 3.4H5l-.9-3.2z" fill="url(#gred)"/>
<path d="M15.6 5.2L4.1 27.4l.9 3.2h5.4l1-3.4L22 18z" fill="#c41818" opacity=".55"/>
<path d="M8 20l13-6.5M6 24l17-6.5" stroke="#8e0d0d" stroke-width=".8" opacity=".7" fill="none"/>
<path d="M5 30.6h5.4l.6-2H4.6zM20.600 30.600h5.400l.4-2h-6.5z" fill="#f04a4a"/><path d="M30.1 18.5h7l-3.5 4.4z" fill="#2b3242"/></svg>
<svg class="ic" style="left:49px;top:6.5px" width="17" height="13" viewBox="0 0 17 13"><path d="M.8 1h11.2l3.400 3.300V11.800H.8z" fill="url(#gw)" stroke="#3c3f46" stroke-width=".9"/><path d="M12 1v3.300h3.400" fill="#fff" stroke="#6b6f78" stroke-width=".7"/></svg>
<svg class="ic" style="left:72.5px;top:5.5px" width="17" height="12" viewBox="0 0 17 12"><path d="M1 10.800V2.400l1-1.300h4.200l1 1.300h5.300v2" fill="#e9ebee" stroke="#3c3f46" stroke-width=".9"/><path d="M1 10.800l3.600-6.300h11.600l-3.800 6.300z" fill="#c7ccd6" stroke="#3c3f46" stroke-width=".9"/></svg>
<svg class="ic" style="left:98px;top:4px" width="14.5" height="14.5" viewBox="0 0 14.5 14.5"><rect x=".6" y=".6" width="12.800" height="12.800" rx="1" fill="#5d6880" stroke="#3b4354" stroke-width=".9"/><rect x="3" y=".9" width="8" height="5.200" fill="#f2f3f5"/><rect x="3" y="8" width="8" height="5.200" fill="#e4e6ea"/><rect x="4.200" y="9.400" width="2" height="2.600" fill="#3b4354"/></svg>
<svg class="ic" style="left:121px;top:4px" width="17" height="14.5" viewBox="0 0 17 14.5"><rect x=".6" y=".6" width="12.800" height="12.800" rx="1" fill="#5d6880" stroke="#3b4354" stroke-width=".9"/><rect x="3" y=".9" width="8" height="5.200" fill="#f2f3f5"/><rect x="3" y="8" width="8" height="5.200" fill="#e4e6ea"/><rect x="4.200" y="9.400" width="2" height="2.600" fill="#3b4354"/><path d="M8.500 8.300l6-6.300 1.800 1.700-6 6.300-2.400.8z" fill="#f0a830" stroke="#7a4a10" stroke-width=".6"/><path d="M14.500 2l1.800 1.700" stroke="#d04040" stroke-width="1.400"/></svg>
<svg class="ic" style="left:145px;top:3.5px" width="16" height="15.5" viewBox="0 0 16 15.5"><rect x="3.600" y=".6" width="8.800" height="5" fill="#f4f5f7" stroke="#50555f" stroke-width=".8"/><rect x=".6" y="5.200" width="14.800" height="6.600" rx="1.200" fill="url(#gw)" stroke="#50555f" stroke-width=".8"/><rect x="3.200" y="9.600" width="9.600" height="5" fill="#fff" stroke="#50555f" stroke-width=".8"/><rect x="4.500" y="11.600" width="7" height="1.300" fill="#8fb4e8"/></svg>
<svg class="ic" style="left:169px;top:6.5px" width="16" height="11" viewBox="0 0 16 11"><path d="M.8 4.600L6.400.6v2.500h4.400c2.600 0 4.400 1.700 4.400 4v3.200h-3.400V7.800c0-.9-.6-1.400-1.500-1.400H6.400v2.700z" fill="#f2f3f5" stroke="#3f434b" stroke-width=".8" stroke-linejoin="round"/></svg>
<svg class="ic" style="left:190px;top:8px" width="10" height="7" viewBox="0 0 10 7"><path d="M2 1.7h5.4l-2.7 3.2z" fill="#fff"/></svg>
<svg class="ic" style="left:209px;top:8px" width="10" height="7" viewBox="0 0 10 7"><path d="M2 1.7h5.4l-2.7 3.2z" fill="#fff"/></svg>
<svg class="ic" style="left:230px;top:4px" width="15.5" height="15.5" viewBox="0 0 15.5 15.5"><path d="M.7 .7h8.600l2.600 2.600v9.300H.7z" fill="#f3f4f6" stroke="#44484f" stroke-width=".8"/><circle cx="9" cy="9" r="3.300" fill="#cfd6e2" stroke="#33373e" stroke-width="1.100"/><path d="M11.300 11.500l3.200 3.200" stroke="#33373e" stroke-width="1.600"/></svg>
<svg class="ic" style="left:253px;top:3.9px" width="16" height="16" viewBox="0 0 16 16"><g transform="translate(8 7.800)"><g fill="#f6f6f6" stroke="#2c3038" stroke-width=".8"><rect x="-1.700" y="-7.800" width="3.400" height="4" transform="rotate(0)"/><rect x="-1.700" y="-7.800" width="3.400" height="4" transform="rotate(45)"/><rect x="-1.700" y="-7.800" width="3.400" height="4" transform="rotate(90)"/><rect x="-1.700" y="-7.800" width="3.400" height="4" transform="rotate(135)"/><rect x="-1.700" y="-7.800" width="3.400" height="4" transform="rotate(180)"/><rect x="-1.700" y="-7.800" width="3.400" height="4" transform="rotate(225)"/><rect x="-1.700" y="-7.800" width="3.400" height="4" transform="rotate(270)"/><rect x="-1.700" y="-7.800" width="3.400" height="4" transform="rotate(315)"/><circle r="5.600"/></g><circle r="5.200" fill="#f6f6f6"/><circle r="2.700" fill="#5e5e5e" stroke="#2c3038" stroke-width="1"/></g></svg>
<svg class="ic" style="left:419px;top:8.5px" width="9" height="7" viewBox="0 0 9 7"><path d="M1.3 1.5h6l-3 3.6z" fill="#fff"/></svg>
<svg class="ic" style="left:433px;top:6.5px" width="16" height="11" viewBox="0 0 16 11"><path d="M15.200 4.600L9.600.6v2.500H5.200C2.600 3.100.8 4.800.8 7.100v3.200h3.400V7.800c0-.9.6-1.400 1.500-1.400h3.900v2.700z" fill="#8c8c8c" stroke="#6a6a6a" stroke-width=".8" stroke-linejoin="round"/></svg>
<svg class="ic" style="left:454px;top:8.5px" width="9" height="7" viewBox="0 0 9 7"><path d="M1.8 1.8h5l-2.5 3z" fill="#fff"/></svg>
<svg class="ic" style="left:468px;top:6px" width="11" height="10" viewBox="0 0 11 10"><rect x="1.500" y="1.300" width="7.600" height="1.500" fill="#f2f2f2"/><path d="M1.5 3.9h7.6l-3.8 4.2z" fill="#f2f2f2"/></svg>
<svg class="ic" style="left:1035px;top:7px" width="7" height="10" viewBox="0 0 7 10"><path d="M1.300 .8l4.200 4-4.200 4z" fill="#f2f2f2"/></svg>
<svg class="ic" style="left:1229.5px;top:4.5px" width="17.5" height="16" viewBox="0 0 17.5 16"><rect x="6.200" y="5" width="4.400" height="4.600" fill="#1c1e24"/>
<path d="M3 .8h3.300l1 2.400.7 5.800-1.500.8v5.200H1.100V9.400L1.900 3.200z" fill="url(#gw)" stroke="#14161b" stroke-width="1" stroke-linejoin="round"/>
<path d="M13.700 .8h-3.300l-1 2.400-.7 5.800 1.500.8v5.200h5.400V9.400L14.800 3.200z" fill="url(#gw)" stroke="#14161b" stroke-width="1" stroke-linejoin="round"/>
<path d="M1.100 9.600h5.400M10.200 9.600h5.400" stroke="#14161b" stroke-width="1"/></svg>
<svg class="ic" style="left:1254px;top:4px" width="17" height="16" viewBox="0 0 17 16"><path d="M.7 15c.9-2.200 4-3 5.600-4.600h3.200c1.600 1.600 4.700 2.400 5.600 4.600z" fill="#f6f6f8" stroke="#14161b" stroke-width="1" stroke-linejoin="round"/><ellipse cx="7.900" cy="5.500" rx="3.800" ry="5" fill="url(#gw)" stroke="#14161b" stroke-width="1.100"/></svg>
<svg class="ic" style="left:1358px;top:9.5px" width="9" height="7" viewBox="0 0 9 7"><path d="M1.8 1.7h5.4l-2.7 3.2z" fill="#fff"/></svg>
<svg class="ic" style="left:1373.5px;top:5px" width="16" height="14.5" viewBox="0 0 16 14.5"><path d="M1.200 1.200h4.600L8 4.600l2.200-3.400h4.600L10.400 7.200l4.400 6.200h-4.600L8 10l-2.200 3.400H1.200l4.400-6.200z" fill="#3457b2" stroke="#eef2fb" stroke-width="1"/></svg>
<svg class="ic" style="left:1396.5px;top:3.5px" width="18" height="16" viewBox="0 0 18 16"><path d="M9 3L2.800 13h12.400z" fill="none" stroke="#f2f4fa" stroke-width="3.400" stroke-linejoin="round"/><path d="M9 3L2.800 13h12.400z" fill="none" stroke="#3457b2" stroke-width="1.500" stroke-linejoin="round"/><circle cx="9" cy="3" r="1.900" fill="#3457b2" stroke="#f2f4fa" stroke-width=".9"/><circle cx="2.800" cy="13" r="1.900" fill="#3457b2" stroke="#f2f4fa" stroke-width=".9"/><circle cx="15.200" cy="13" r="1.900" fill="#3457b2" stroke="#f2f4fa" stroke-width=".9"/></svg>
<svg class="ic" style="left:1417.5px;top:9.5px" width="9" height="7" viewBox="0 0 9 7"><path d="M1.6 1.7h5.4l-2.7 3.2z" fill="#fff"/></svg>
<svg class="ic" style="left:1434px;top:4px" width="2" height="17" viewBox="0 0 2 17"><path d="M.5 0v17" stroke="#8a8a8a" stroke-width="1"/></svg>
<svg class="ic" style="left:1444px;top:3.5px" width="17" height="17" viewBox="0 0 17 17"><circle cx="8" cy="8.400" r="7.300" fill="#f4f6fb" stroke="#2c3a66" stroke-width=".9"/><text x="8" y="13" font-family="'Liberation Sans',sans-serif" font-weight="bold" font-size="12.500" text-anchor="middle" fill="#2d4fb0">?</text></svg>
<svg class="ic" style="left:1465px;top:9.5px" width="9" height="7" viewBox="0 0 9 7"><path d="M1.7 1.7h5.4l-2.7 3.2z" fill="#fff"/></svg>
<svg class="ic" style="left:1493px;top:0px" width="103" height="19" viewBox="0 0 103 19"><rect x="10" y="8.800" width="11.500" height="3.400" fill="#f4f4f4"/><path d="M38.700 3.500h7.600v6.800M36.200 6h7.600v6.800h-7.600z" fill="none" stroke="#f4f4f4" stroke-width="1.800"/><path d="M75.800 4.500l8 7.300M83.800 4.500l-8 7.300" stroke="#f4f4f4" stroke-width="2.500"/></svg>
<svg class="ic" style="left:1300px;top:31.5px" width="14" height="7" viewBox="0 0 14 7"><rect x=".3" y=".3" width="13" height="6.300" rx="1.600" fill="#f0f0f0"/><path d="M4 4.800h5.600L6.800 1.800z" fill="#333"/></svg>
<svg class="ic" style="left:1317.5px;top:33px" width="8" height="6" viewBox="0 0 8 6"><path d="M1.5 1.5h5l-2.5 3z" fill="#eee"/></svg>
<svg class="ic" style="left:33px;top:53px" width="33" height="28" viewBox="0 0 33 28"><path d="M1 14.600L6.100 5.200 16.300 1.500l10.600 3.700 4.400 8.500-3.600 7.400-11.400 5.300-11-4.900z" fill="#c9cdd6" stroke="#3c3f47" stroke-width="1.300" stroke-dasharray="2.400 .8" stroke-linejoin="round"/>
<path d="M1 14.600L6.100 5.200 16.300 1.500l10.600 3.700 4.400 8.500-3.600 3.700-11.400 3.700-11-3.700z" fill="#f8f9fb" stroke="#8b8f98" stroke-width=".6" stroke-linejoin="round"/>
<path d="M16.300 1.500v8M16.300 16.400v9.800M6.100 5.200l5.400 5.200M26.900 5.200l-5.600 5.200M1 14.600l9-1.400M31.300 13.700l-9.400-.4M5.300 17.400l5.700-2.200M27.700 17.400l-5.900-2.200M5.300 17.400v4.100M27.700 17.400v3.700" stroke="#7d818a" stroke-width=".7" fill="none"/>
<ellipse cx="15.900" cy="12.900" rx="6.300" ry="3.500" fill="#9a9ea8" stroke="#484b53" stroke-width="1.100"/>
<ellipse cx="15.900" cy="13.500" rx="3.900" ry="1.700" fill="#34373e"/></svg>
<svg class="ic" style="left:45px;top:103px" width="10" height="7" viewBox="0 0 10 7"><path d="M1.8 1.8h5.4l-2.7 3.2z" fill="#fff"/></svg>
<svg class="ic" style="left:101px;top:53px" width="16.5" height="14" viewBox="0 0 16.5 14"><path d="M1.200 8.600c.4-4.600 3.200-7.200 6.900-7.200s6.500 2.600 6.900 7.200l-3.400-.4c-.4-2.400-1.600-3.600-3.500-3.600s-3.100 1.200-3.500 3.600z" fill="#dbe7f6" stroke="#2c6cc0" stroke-width="1"/><path d="M8.100 1.200v3.600M5.200 2.200l1 2.800M11 2.200l-1 2.800" stroke="#4a90e8" stroke-width="1" fill="none"/><circle cx="4" cy="9.700" r="3.300" fill="#f7f8fa" stroke="#30333a" stroke-width="1"/><circle cx="12.500" cy="9.700" r="3.300" fill="#f7f8fa" stroke="#30333a" stroke-width="1"/></svg>
<svg class="ic" style="left:125px;top:53px" width="16.5" height="16" viewBox="0 0 16.5 16"><path d="M1 10.800L4.600 1.200l6.400.5L7.400 9l-2 5.800z" fill="#c4d6ee" stroke="#2c4c86" stroke-width=".9" stroke-linejoin="round"/><path d="M7.400 9c1.200-4.800 3.400-7 7-8l1.400 10.400-6.600-2.600z" fill="#e3ecf8" stroke="#2c4c86" stroke-width=".8" stroke-linejoin="round"/></svg>
<svg class="ic" style="left:101px;top:77px" width="16.5" height="15.5" viewBox="0 0 16.5 15.5"><path d="M1 .8c7.500.8 13 5.600 14.800 13.700H7.600C7 11.600 4.600 9.500 1.400 8.800z" fill="#f4f6fa" stroke="#3a3d45" stroke-width=".9" stroke-linejoin="round"/><path d="M4.400 1.600l-.9 7.800M8.600 3.600l-3 7M12.200 7l-4.200 5.400" stroke="#2f6fc4" stroke-width="1" fill="none"/></svg>
<svg class="ic" style="left:124.5px;top:77px" width="16" height="16.5" viewBox="0 0 16 16.5"><path d="M2.800 .8c-2.600 4 2.600 9.500-.2 14.600" fill="none" stroke="#d6d9df" stroke-width="1.200"/><path d="M6 1.400l7.400-1c-2.800 3.800 2.800 8.600.2 13.400L6.600 15c2.800-4.800-3-9.400-.6-13.600z" fill="#f2f5fa" stroke="#2c4c86" stroke-width=".8"/><path d="M5.600 3.800l6.800-1M6.200 6.600l7 -.8M7.600 9.400l6.600-.8M7.800 12.200l6.200-.9" stroke="#3a78d0" stroke-width="1.100"/></svg>
<svg class="ic" style="left:169px;top:51px" width="32" height="32" viewBox="0 0 32 32"><circle cx="16" cy="15.900" r="14.500" fill="url(#gs)" stroke="#34373e" stroke-width="1.200"/>
<path d="M10.400 8.400h10.800v10.800H10.400z" fill="#cdd5df"/><path d="M21.200 8.400h8.200l1 5-.3 5.800h-8.900z" fill="#bfc5cf"/>
<path d="M3.500 8.400h25M1.600 19.200c9 1.600 19.800 1.600 28.800 0M10.400 2.600v16.900M21.200 2.600v16.900" stroke="#34373e" stroke-width="1.100" fill="none"/></svg>
<svg class="ic" style="left:224px;top:53px" width="16" height="16" viewBox="0 0 16 16"><circle cx="7.300" cy="7.300" r="6.800" fill="url(#gs)" stroke="#3a3d45" stroke-width=".9"/>
<path d="M1 5.200h12.600M.8 9.300h13M4.700 1.200v8.100M9.900 1.200v8.100" stroke="#4a4e57" stroke-width=".8" fill="none"/>
<rect x="5.100" y="5.600" width="4.400" height="3.300" fill="#c9d0da"/><path d="M12.800 9.200v6.400M9.600 12.400h6.400" stroke="#5cb400" stroke-width="2.200"/></svg>
<svg class="ic" style="left:224px;top:77px" width="16" height="16" viewBox="0 0 16 16"><circle cx="7.300" cy="7.300" r="6.800" fill="url(#gs)" stroke="#3a3d45" stroke-width=".9"/>
<path d="M1 5.200h12.600M.8 9.300h13M4.700 1.200v8.100M9.900 1.200v8.100" stroke="#4a4e57" stroke-width=".8" fill="none"/>
<rect x="5.100" y="5.600" width="4.400" height="3.300" fill="#c9d0da"/><path d="M10.800 12.800h5" stroke="#e2200e" stroke-width="2"/></svg>
<svg class="ic" style="left:224px;top:100.5px" width="16" height="16.5" viewBox="0 0 16 16.5"><circle cx="7.300" cy="8" r="6.800" fill="url(#gs)" stroke="#3a3d45" stroke-width=".9"/><path d="M1 6h6.500M.9 10h4M4.700 2v9" stroke="#4a4e57" stroke-width=".8"/><path d="M.2 15.800L15 .8" stroke="#e8e8e8" stroke-width="1.100"/></svg>
<svg class="ic" style="left:375px;top:51px" width="31" height="32" viewBox="0 0 31 32"><path d="M15.100 1.300h14.400v14.500a14.500 14.500 0 1 1-14.400-14.500z" fill="url(#gs)" stroke="#2e3138" stroke-width="1.200" stroke-linejoin="round"/>
<path d="M.9 11.600h15.200c1.200 0 1.800.6 1.900 1.700l1.400 15.700" fill="none" stroke="#2e3138" stroke-width="1"/><path d="M17.400 11.900L29.200 1.700" stroke="#4a9af4" stroke-width="1.200"/></svg>
<svg class="ic" style="left:439px;top:51px" width="32" height="32" viewBox="0 0 32 32"><circle cx="15.100" cy="16" r="14.500" fill="url(#gs)" stroke="#2e3138" stroke-width="1.200"/>
<path d="M.9 11.600h15.600c1.200 0 1.800.6 1.900 1.700l.6 15.700M18 11.900l6-5.400" fill="none" stroke="#2e3138" stroke-width="1"/>
<path d="M20.400 2.200l8.400 8.400M28.800 2.200l-8.400 8.400" stroke="#e63214" stroke-width="3.200"/></svg>
<svg class="ic" style="left:504px;top:51px" width="32" height="31" viewBox="0 0 32 31"><path d="M1.500 10.100L10.400 1.600h20.300v20L22.800 29.100H1.500z" fill="#1c2846" stroke="#1c2846" stroke-width="1.600" stroke-linejoin="round"/>
<path d="M1.500 10.100h21.300v19H1.500z" fill="#c9dcf5"/><path d="M1.500 10.100L10.400 1.600h20.300l-7.900 8.500z" fill="#eaf1fb"/><path d="M22.800 10.100l7.900-8.500v20l-7.900 7.500z" fill="#8eaee2"/>
<path d="M1.500 10.100h21.300v19" fill="none" stroke="#f4f8fd" stroke-width=".9"/>
<path d="M11.900 27.400V15" stroke="#0c0f16" stroke-width="1.900"/><path d="M8.600 16l3.300-3.800 3.300 3.800z" fill="#0c0f16"/></svg>
<svg class="ic" style="left:554px;top:53px" width="16.5" height="16.5" viewBox="0 0 16.5 16.5"><path d="M.9 4.200L3.500 1.200h11.600v10.300l-2.600 3H.9z" fill="#bcd2f0" stroke="#1e2c50" stroke-width=".9" stroke-linejoin="round"/><path d="M.9 4.200h11.600v10.300M12.500 4.200l2.600-3" fill="none" stroke="#f2f6fc" stroke-width="1"/><path d="M3 15.500L9.600 1.600" stroke="#4a90f0" stroke-width="1.700" stroke-dasharray="2.200 1"/></svg>
<svg class="ic" style="left:554px;top:77px" width="16.5" height="16.5" viewBox="0 0 16.5 16.5"><rect x=".5" y="1.200" width="7.400" height="5.800" fill="#5aa800" stroke="#e6f0d8" stroke-width=".5"/><path d="M4.200 1.200v3.400M.5 4.600h7.400" stroke="#2e6a00" stroke-width=".8"/><path d="M1.200 9.500v2.800h3M3 10.800l1.600 1.500L3 13.900" fill="none" stroke="#e8e8e8" stroke-width="1"/><path d="M7 9.9l1.300-1.400h6.600v4.800l-1.300 1.400h-6.600z" fill="#1e2c50"/><rect x="7.5" y="10.2" width="5.600" height="3.900" fill="#b4cef2" stroke="#eef4fc" stroke-width=".7"/></svg>
<svg class="ic" style="left:554px;top:101px" width="16.5" height="16.5" viewBox="0 0 16.5 16.5"><rect x="1" y="1.200" width="6.600" height="5.400" fill="#5a5a5a" stroke="#5aa800" stroke-width="1.500"/><rect x="2.700" y="3" width="3.300" height="1.800" fill="#e6f0d8"/><path d="M1.200 9.500v2.800h3M3 10.800l1.600 1.500L3 13.900" fill="none" stroke="#e8e8e8" stroke-width="1"/><path d="M7 9.9l1.300-1.400h6.600v4.800l-1.300 1.400h-6.600z" fill="#1e2c50"/><rect x="7.5" y="10.2" width="5.600" height="3.900" fill="#b4cef2" stroke="#eef4fc" stroke-width=".7"/></svg>
<svg class="ic" style="left:705.5px;top:52.5px" width="17" height="17" viewBox="0 0 17 17"><path d="M.8 3L3 .8h7.200v7.300L8 10.300H.8zM.8 3h7.200v7.300M8 3l2.200-2.200" fill="none" stroke="#262626" stroke-width="1.100"/><path d="M3 3.400v4.700h4.600" fill="none" stroke="#d0d0d0" stroke-width=".8"/>
<path d="M1 12v2.600h2.600M2.400 13.200l1.500 1.400-1.500 1.500" fill="none" stroke="#e8e8e8" stroke-width="1"/>
<path d="M6.800 8.200l2-2h7.600v7.600l-2 2.200H6.800z" fill="#5b9bf0"/><path d="M6.800 8.200l2-2h7.600l-2 2z" fill="#eef4fd"/><rect x="6.800" y="8.200" width="7.600" height="7.800" fill="#c4dbf7"/></svg>
<svg class="ic" style="left:705.5px;top:77px" width="17" height="17" viewBox="0 0 17 17"><path d="M1.200 3.200L3.200 1.200h7v6.800l-2 2H1.200z" fill="#f4f4f6"/><path d="M8.200 3.200l2-2v6.800l-2 2z" fill="#c6c8cc"/><path d="M1.200 3.200h7v6.800h-7z" fill="#e6e7ea"/>
<path d="M1 12v2.600h2.600M2.400 13.200l1.500 1.400-1.500 1.500" fill="none" stroke="#e8e8e8" stroke-width="1"/>
<path d="M7 8.400l2-2.100h7.400v7.300l-2 2.200H7z" fill="#32508f" stroke="#15306e" stroke-width="1"/><path d="M9.400 8.800v4.800h4.800M7 8.400h7.400v7.400M14.400 8.400l2-2.100" fill="none" stroke="#6d9cf0" stroke-width=".9"/></svg>
<svg class="ic" style="left:915px;top:53px" width="30" height="30" viewBox="0 0 30 30"><path d="M2 10.600c0-1.400.6-2.300 1.600-3L9.400 2.200c.8-.6 1.600-.8 2.600-.8h14c1.400 0 2.400 1 2.400 2.400v14.400c0 1-.3 1.800-1 2.500l-5.400 5.800c-.7.800-1.600 1.200-2.700 1.200H4.600c-1.600 0-2.600-1-2.600-2.600z" fill="#fbfbfc" stroke="#2e3138" stroke-width="1.300"/>
<path d="M22.400 9.400l6-6.400v15.400l-6 7.200z" fill="#cfd2d8"/><rect x="2.700" y="9.400" width="19.700" height="17.600" rx="1.600" fill="url(#gw)"/></svg>
<svg class="ic" style="left:977.5px;top:100px" width="9" height="6" viewBox="0 0 9 6"><path d="M1.6 1.45h5.2l-2.6 3.1z" fill="#fff"/></svg>
<svg class="ic" style="left:1008px;top:53px" width="30" height="29" viewBox="0 0 30 29"><path d="M1.600 12.400L5.400 8.400h12.400v9.800l-3.600 3.600H1.600z" fill="#34373e"/><path d="M2 12.600L5.600 8.800h12v.4l-3.600 3.400z" fill="#ffffff"/><path d="M2 12.600h12v8.800H2z" fill="url(#gw)"/>
<path d="M16.600 9.600L28.600 .8v17.400L16.600 28z" fill="#b9bbc0" stroke="#3a3d45" stroke-width=".9" stroke-linejoin="round"/><path d="M19 11.400L26.200 6v10.400L19 22.200z" fill="#9ec0f0" stroke="#2e58a8" stroke-width=".9"/></svg>
<svg class="ic" style="left:1062px;top:53px" width="16.5" height="16" viewBox="0 0 16.5 16"><path d="M.8 6.400L2.600 4.200h8.600v5.600l-1.800 2.200H.8z" fill="#f4f5f7" stroke="#44474e" stroke-width=".7"/><path d="M.8 6.400h8.600v5.600M9.400 6.400l1.800-2.200" fill="none" stroke="#8a8d94" stroke-width=".6"/><rect x="5.800" y="6" width="2.800" height="3.600" fill="#4a86e0"/>
<path d="M7 4.400L14.600 .8v10.600L7 15z" fill="none" stroke="#6aa0f0" stroke-width=".9" stroke-dasharray="1.600 1"/></svg>
<svg class="ic" style="left:1062px;top:77px" width="16.5" height="16" viewBox="0 0 16.5 16"><path d="M.8 7.400l1.800-2.200h4v6.400H.8z" fill="#f4f5f7" stroke="#6a6d74" stroke-width=".6"/><path d="M5.400 5.200L9.800 2.400v9.800l-4.400 3z" fill="#a8c6f2" stroke="#1e3f88" stroke-width=".9"/><path d="M9.800 2.400l5.200-1.600v10L9.800 12.200z" fill="#c4daf6" stroke="#1e3f88" stroke-width=".9"/></svg>
<svg class="ic" style="left:1062px;top:101px" width="16.5" height="16" viewBox="0 0 16.5 16"><path d="M1 4.200L4.600 .8v9.400L1 13.600z" fill="#e4e6ea" stroke="#26282e" stroke-width=".9"/><path d="M6.800 3h4.800v4M9.600 5.200l2 2 2-2" fill="none" stroke="#f2f2f2" stroke-width="1.200"/><path d="M5.600 9.400h7.600v4.200H5.600z" fill="#f2f3f5" stroke="#26282e" stroke-width=".9"/><rect x="12" y="12.400" width="3" height="3" fill="#fff" stroke="#26282e" stroke-width=".8"/></svg>
<svg class="ic" style="left:1208px;top:52px" width="31" height="31" viewBox="0 0 31 31"><path d="M1.200 7.700L7.100 1.400h22.500v22L23.700 29.300H1.200z" fill="#f2f4f8"/>
<path d="M1.200 29.300L29.600 1.400H7.100L1.200 7.700z" fill="#dfeafb"/>
<path d="M12.500 18.500h11.200v10.800H12.500zM23.700 7.700l5.900-6.300v22l-5.900 5.900z" fill="url(#gw)"/>
<path d="M4.400 4.600V25.500M7.600 1.800V22M18.300 1.800V12.500M4.400 12.300H18M7.600 15.400h5.500" fill="none" stroke="#20242e" stroke-width="1"/>
<path d="M1.200 7.700h21M1.200 7.700V29M1.200 18.500h11M1.200 7.700L7.100 1.400h21M12.500 7.700l5.900-6.300M4.100 4.500h22M12.500 7.700v10" fill="none" stroke="#7caaf4" stroke-width="1.200"/>
<path d="M12.500 18.500V29.300M12.500 18.500H23.700M23.700 7.700V29.300H1.200M23.700 7.700l5.900-6.300v22l-5.900 5.900M26.600 4.500V26.300M23.700 18.500l5.900-6.200" fill="none" stroke="#0e1016" stroke-width="1.200"/>
<path d="M1.200 29.300L29.600 1.400" stroke="#0c1030" stroke-width="1.400"/></svg>
<svg class="ic" style="left:1275px;top:52px" width="31" height="32" viewBox="0 0 31 32"><path d="M2.100 9.100L7.100 2.300h22.400v19.800l-7.200 5.800H2.100z" fill="#2b2e35" stroke="#2b2e35" stroke-width="1.200" stroke-linejoin="round"/>
<path d="M2.100 9.100L7.100 2.300h22.400l-7.200 6.800z" fill="#ffffff"/><path d="M22.300 9.100l7.200-6.800v19.800l-7.200 5.800z" fill="url(#gw2)"/><rect x="2.100" y="9.100" width="20.200" height="18.800" fill="#c1d8f5"/>
<rect x="2.100" y="7.700" width="20.200" height="1.800" fill="#4a90f0"/><rect x="1" y="26.400" width="4" height="4" fill="#4a90f0" stroke="#2563c0" stroke-width=".6"/></svg>
<svg class="ic" style="left:1286px;top:102.5px" width="9" height="6" viewBox="0 0 9 6"><path d="M1.8 1.45h5.2l-2.6 3.1z" fill="#fff"/></svg>
<svg class="ic" style="left:1355px;top:52px" width="32" height="31" viewBox="0 0 32 31"><path d="M15.600 2.900l11.500 6.200v13.700l-11.500 6.500-11.900-6.500V9.100z" fill="none" stroke="#f0f0f0" stroke-width="1"/>
<path d="M15.600 16.300V4" stroke="#5a96f0" stroke-width="1.200"/><path d="M15.600 16.300l-10 5" stroke="#48b020" stroke-width="1.400"/><path d="M15.600 16.300l10.600 5" stroke="#e4502a" stroke-width="1.400"/>
<rect x="13.500" y="14.200" width="4.200" height="4.200" fill="#5a5a5a" stroke="#fff" stroke-width="1"/><rect x="13.500" y=".9" width="4.200" height="4.200" fill="#4a6aa8" stroke="#6aa2f4" stroke-width="1"/>
<rect x="1.700" y="19.300" width="4.400" height="4.400" fill="#3e7a1c" stroke="#5cc02a" stroke-width="1"/><rect x="25.300" y="19.300" width="4.400" height="4.400" fill="#8a3a20" stroke="#f0603a" stroke-width="1"/></svg>
<svg class="ic" style="left:1405.5px;top:100.5px" width="9" height="6" viewBox="0 0 9 6"><path d="M1.6 1.45h5.2l-2.6 3.1z" fill="#fff"/></svg>
<svg class="ic" style="left:135.5px;top:129.5px" width="8" height="8" viewBox="0 0 8 8"><path d="M1 1l5 5M6.400 2.200v4.200H2.200" fill="none" stroke="#d8d8d8" stroke-width="1.200"/></svg>
<svg class="ic" style="left:476px;top:129.5px" width="8" height="8" viewBox="0 0 8 8"><path d="M1 1l5 5M6.400 2.200v4.200H2.200" fill="none" stroke="#d8d8d8" stroke-width="1.200"/></svg>
<svg class="ic" style="left:1179px;top:130px" width="8" height="8" viewBox="0 0 8 8"><path d="M1 1l5 5M6.400 2.200v4.200H2.200" fill="none" stroke="#d8d8d8" stroke-width="1.200"/></svg>
<svg class="ic" style="left:637.5px;top:130px" width="10" height="7" viewBox="0 0 10 7"><path d="M1 1.2h7l-3.5 4z" fill="#fff"/></svg>
<svg class="ic" style="left:1102.5px;top:130px" width="10" height="7" viewBox="0 0 10 7"><path d="M1 1.2h7l-3.5 4z" fill="#fff"/></svg>
<svg class="ic" style="left:0px;top:144px" width="180" height="26" viewBox="0 0 180 26"><defs><linearGradient id="ft" x1="0" y1="0" x2="0" y2="1"><stop offset="0" stop-color="#747474"/><stop offset="1" stop-color="#555555"/></linearGradient></defs>
<path d="M0 25.500V24.600C8 24.600 13 24.500 16.400 23.200 19.500 22 20.800 18 22 12.600 23.200 7.500 24.500 3.500 29.500 3.500H139C144 3.500 145.300 7.500 146.500 12.600 147.700 18 149 22 152.100 23.200 155.500 24.500 160 24.600 168 24.600V25.500z" fill="url(#ft)"/>
<path d="M0 24.600C8 24.600 13 24.500 16.400 23.200 19.500 22 20.800 18 22 12.600 23.200 7.500 24.500 3.500 29.500 3.500H139C144 3.500 145.300 7.500 146.500 12.600 147.700 18 149 22 152.100 23.200 155.500 24.500 160 24.600 168 24.600" fill="none" stroke="#8a8a8a" stroke-width=".8"/>
<path d="M124 11.200l6 5.600M130 11.200l-6 5.600" stroke="#3f3f3f" stroke-width="1.700"/>
<path d="M150.300 7.700h14.500c5 .3 8.300 4.500 8.500 10v4.300H159c-2.500-.3-4-2.500-5-5z" fill="#4c4c4c" stroke="#5e5e5e" stroke-width=".8"/>
<path d="M158.600 15.500h5.400M161.300 12.800v5.400" stroke="#e4e4e4" stroke-width="1.900"/></svg>
<svg class="ic" style="left:26px;top:210px" width="12" height="50" viewBox="0 0 12 50"><path d="M2.200 2.200l7.400 7.400M9.600 2.200L2.200 9.600" stroke="#d6d6d6" stroke-width="2.400"/>
<path d="M2 20.500v9M2 25h8M7 22l3.200 3-3.200 3M2 21h3.500v8H2" fill="none" stroke="#e0e0e0" stroke-width="1.200"/>
<g transform="translate(5.800 43.800)" stroke="#e0e0e0" stroke-width="1.500"><path d="M-5 0h10M0-5v10M-3.600-3.600l7.200 7.200M3.600-3.600l-7.200 7.200"/><circle r="1.700" fill="#575757" stroke="none"/></g></svg>
<svg class="ic" style="left:25px;top:767px" width="14" height="14" viewBox="0 0 14 14"><rect x=".8" y=".8" width="12" height="12" fill="none" stroke="#e8e8e8" stroke-width="1.300"/><path d="M3.500 3.500h3.800v3.800H3.500zM9 3.500v4M3.500 10h7" fill="none" stroke="#e8e8e8" stroke-width="1.200"/></svg>
<svg class="ic" style="left:1555px;top:397px" width="32" height="212" viewBox="0 0 32 212"><g stroke="#474c54" stroke-width="1.100" fill="none">
<circle cx="26" cy="4.800" r="3" /><path d="M24.300 3.100l3.400 3.400M27.700 3.100l-3.400 3.400"/>
<path d="M16 19.500h10.500v10.500a10.500 10.500 0 1 1-10.500-10.500z"/><circle cx="16" cy="30" r="6"/><path d="M9 30h-3.500M16 37v3.500"/>
<path d="M0 56.500h32M0 164h32" stroke="#50555d"/>
<path d="M8 72c-2-3-4-5-2.500-6.500 1.500-1 3 1 4.500 3V63.500c0-2 3-2 3 0V70 62c0-2 3-2 3 0v8-6.500c0-2 3-2 3 0V71v-4c0-2 2.800-2 2.800 0v8c0 5-3 8.500-7.500 8.500-4.500 0-5.500-3-9.300-11.500z"/>
<path d="M5 89.500l13 13M18 89.500l-13 13M5 93.500v-4h4M14 89.500h4v4M5 98.500v4h4"/><circle cx="20.500" cy="104.500" r="4.500"/><path d="M23.500 108l4 4.500" stroke-width="2.200"/>
<path d="M14 149v-18h-3l5-5 5 5h-3v18z"/><path d="M14 137c-6 .5-9.500 2.500-9.500 4.500 0 3 6 5 11.500 5s10.500-2 10.500-5c0-2-3-4-8.500-4.500M6 143l-1.800 3.800 4.300.2"/>
<rect x="4.500" y="169.500" width="5.500" height="5.500"/><rect x="12.800" y="169.500" width="5.500" height="5.500"/><rect x="21" y="169.500" width="5.500" height="5.500"/><rect x="4.500" y="179" width="16.500" height="13"/>
<circle cx="26" cy="205.600" r="3"/><path d="M24.300 204.600h3.400M24.800 206.200h2.400"/>
</g>
<path d="M13.200 49h6l-3 3.200zM13.200 119h6l-3 3.200zM13.200 157h6l-3 3.200zM9 182l8 3.500-8 3.500z" fill="#474c54"/></svg>
<svg class="ic" style="left:1522px;top:358.5px" width="14" height="9" viewBox="0 0 14 9"><path d="M1.500 1.500h9.500l-4.700 5.500z" fill="none" stroke="#9aa1ab" stroke-width="1"/></svg>
<svg class="ic" style="left:408px;top:804px" width="82" height="26" viewBox="0 0 82 26"><defs><linearGradient id="cg" x1="0" y1="0" x2="1" y2="0"><stop offset="0" stop-color="#585858"/><stop offset="1" stop-color="#3c3c3c"/></linearGradient></defs>
<path d="M0 26V3.500Q0 .5 3 .5H54V26z" fill="url(#cg)"/>
<g fill="#9c9c9c"><rect x="4" y="4.4" width="1.600" height="1.600"/><rect x="4" y="7.4" width="1.600" height="1.600"/><rect x="4" y="10.4" width="1.600" height="1.600"/><rect x="4" y="13.4" width="1.600" height="1.600"/><rect x="4" y="16.4" width="1.600" height="1.600"/><rect x="4" y="19.4" width="1.600" height="1.600"/><rect x="7" y="4.4" width="1.600" height="1.600"/><rect x="7" y="7.4" width="1.600" height="1.600"/><rect x="7" y="10.4" width="1.600" height="1.600"/><rect x="7" y="13.4" width="1.600" height="1.600"/><rect x="7" y="16.4" width="1.600" height="1.600"/><rect x="7" y="19.4" width="1.600" height="1.600"/></g>
<path d="M15.800 9.400l8 7.800M23.800 9.400l-8 7.800" stroke="#f0f0f0" stroke-width="2"/>
<path d="M40.500 11.500L47.800 19.300" stroke="#2e2e2e" stroke-width="4.600" stroke-linecap="round"/><circle cx="39.200" cy="10.200" r="4.300" fill="#2e2e2e"/><path d="M40.500 11.500L47.800 19.300" stroke="#ececec" stroke-width="2.800" stroke-linecap="round"/><circle cx="39.200" cy="10.200" r="3.500" fill="#ececec"/><path d="M39.600 10.200L34.600 8.600 37.400 5.400z" fill="#494949"/>
<rect x="59.300" y="6.200" width="14.600" height="13.100" rx="1.500" fill="#a8adb9" stroke="#6a7080" stroke-width="1"/>
<path d="M62.300 9.800l4 3-4 3M67.600 16.600h3.600" fill="none" stroke="#1e2430" stroke-width="1.400"/>
<path d="M77.600 10.400h5l-2.500 3z" fill="#4e4e4e"/></svg>
<svg class="ic" style="left:1176px;top:812px" width="12" height="10" viewBox="0 0 12 10"><path d="M2.500 7h7l-3.500-4z" fill="#1a1a1a"/></svg>
<svg class="ic" style="left:0px;top:831px" width="220" height="20" viewBox="0 0 220 20"><defs><linearGradient id="lt" x1="0" y1="0" x2="0" y2="1"><stop offset="0" stop-color="#6c6c6c"/><stop offset="1" stop-color="#8c8c8c"/></linearGradient><linearGradient id="lt2" x1="0" y1="0" x2="0" y2="1"><stop offset="0" stop-color="#5c5c5c"/><stop offset="1" stop-color="#6c6c6c"/></linearGradient></defs>
<path d="M6.500 1C11 1.500 12.500 8 14.500 13c1.200 3 2.500 4.800 5.500 4.800H58c3 0 4.300-1.800 5.500-4.800 2-5 3.500-11.500 8-12z" fill="url(#lt)"/>
<path d="M70 1c3.500 3 4 8 6 12 1.200 3 2.500 4.800 5.500 4.800H118c3 0 4.300-1.800 5.500-4.800 2-5 3-9.500 5.500-12z" fill="url(#lt2)"/>
<path d="M127.500 1c3.500 3 4 8 6 12 1.200 3 2.500 4.800 5.500 4.800H178c3 0 4.300-1.800 5.500-4.800 2-5 3-9.500 5.500-12z" fill="url(#lt2)"/>
<path d="M14.500 13c1.200 3 2.500 4.800 5.500 4.800H58c3 0 4.300-1.800 5.500-4.800" fill="none" stroke="#a0a0a0" stroke-width=".8"/>
<path d="M197 2.500h16.300c0 7-2.500 13.300-9.300 13.800H195c-3 0-4-1.500-3.500-4.500 1-5 2.500-9 5.500-9.300z" fill="#555" stroke="#626262" stroke-width=".8"/>
<path d="M199.500 9.200h5.800M202.400 6.300v5.800" stroke="#e4e4e4" stroke-width="1.800"/></svg>
<svg class="ic" style="left:855px;top:836px" width="16" height="17" viewBox="0 0 16 17"><g stroke="#e0e0e0" stroke-width="1"><path d="M1.5 1.500v13.800" stroke-dasharray="2.400 1"/><path d="M4.4 1.500v13.800" stroke-dasharray="2.400 1"/><path d="M7.3 1.500v13.800" stroke-dasharray="2.400 1"/><path d="M10.2 1.500v13.800" stroke-dasharray="2.400 1"/><path d="M13.1 1.500v13.800" stroke-dasharray="2.400 1"/></g><g fill="#c8c8c8"><rect x="0" y="3" width="1.200" height="1.200"/><rect x="0" y="6" width="1.200" height="1.200"/><rect x="0" y="9" width="1.200" height="1.200"/><rect x="0" y="12" width="1.200" height="1.200"/><rect x="13.8" y="3" width="1.200" height="1.200"/><rect x="13.8" y="6" width="1.200" height="1.200"/><rect x="13.8" y="9" width="1.200" height="1.200"/><rect x="13.8" y="12" width="1.200" height="1.200"/></g></svg>
<svg class="ic" style="left:879px;top:836px" width="16" height="17" viewBox="0 0 16 17"><g fill="#e0e0e0"><rect x="0.6" y="2" width="1.300" height="1.300"/><rect x="0.6" y="5.1" width="1.300" height="1.300"/><rect x="0.6" y="8.2" width="1.300" height="1.300"/><rect x="0.6" y="11.3" width="1.300" height="1.300"/><rect x="0.6" y="14.4" width="1.300" height="1.300"/><rect x="3.7" y="2" width="1.300" height="1.300"/><rect x="3.7" y="5.1" width="1.300" height="1.300"/><rect x="3.7" y="8.2" width="1.300" height="1.300"/><rect x="3.7" y="11.3" width="1.300" height="1.300"/><rect x="3.7" y="14.4" width="1.300" height="1.300"/><rect x="6.8" y="2" width="1.300" height="1.300"/><rect x="6.8" y="5.1" width="1.300" height="1.300"/><rect x="6.8" y="8.2" width="1.300" height="1.300"/><rect x="6.8" y="11.3" width="1.300" height="1.300"/><rect x="6.8" y="14.4" width="1.300" height="1.300"/><rect x="9.9" y="2" width="1.300" height="1.300"/><rect x="9.9" y="5.1" width="1.300" height="1.300"/><rect x="9.9" y="8.2" width="1.300" height="1.300"/><rect x="9.9" y="11.3" width="1.300" height="1.300"/><rect x="9.9" y="14.4" width="1.300" height="1.300"/><rect x="13" y="2" width="1.300" height="1.300"/><rect x="13" y="5.1" width="1.300" height="1.300"/><rect x="13" y="8.2" width="1.300" height="1.300"/><rect x="13" y="11.3" width="1.300" height="1.300"/><rect x="13" y="14.4" width="1.300" height="1.300"/></g></svg>
<svg class="ic" style="left:902.2px;top:841.5px" width="9" height="6" viewBox="0 0 9 6"><path d="M1 1h7l-3.5 4z" fill="#f4f4f4"/></svg>
<svg class="ic" style="left:923.5px;top:837.5px" width="12" height="16" viewBox="0 0 12 16"><rect x="1.300" y="9.800" width="3.800" height="4" fill="#d2d2d2"/><path d="M4.500 10V1.700h5.400v4.700H4.500" fill="none" stroke="#d2d2d2" stroke-width="1.200"/></svg>
<svg class="ic" style="left:944.5px;top:837px" width="20" height="16" viewBox="0 0 20 16"><path d="M1 5.800h7.400M4.700 2.100v7.400" stroke="#2a8cff" stroke-width="1.500"/><rect x="7.800" y="9.700" width="10.200" height="4.800" rx="1.800" fill="#2a8cff" stroke="#1766cc" stroke-width=".8"/></svg>
<svg class="ic" style="left:972px;top:838px" width="15" height="14" viewBox="0 0 15 14"><path d="M2 1.300v11.400h11.800M2 8.800h3.800v3.900" fill="none" stroke="#d2d2d2" stroke-width="1.100"/></svg>
<svg class="ic" style="left:994.5px;top:836px" width="18" height="17" viewBox="0 0 18 17"><circle cx="8.500" cy="8.400" r="6.700" fill="none" stroke="#2a8cff" stroke-width="1.500"/><path d="M8.500 8.400h7.500M8.500 8.400l5.600-6.400" stroke="#2a8cff" stroke-width="1.300"/></svg>
<svg class="ic" style="left:1018px;top:841.5px" width="9" height="6" viewBox="0 0 9 6"><path d="M1 1h7l-3.5 4z" fill="#f4f4f4"/></svg>
<svg class="ic" style="left:1033px;top:835px" width="19" height="19" viewBox="0 0 19 19"><path d="M9.400 .8v18M1.300 1l15.600 16.800" stroke="#bdbdbd" stroke-width="1.100"/><circle cx="9.400" cy="9.700" r="1.100" fill="none" stroke="#bdbdbd" stroke-width=".7"/></svg>
<svg class="ic" style="left:1056.9px;top:841.5px" width="9" height="6" viewBox="0 0 9 6"><path d="M1 1h7l-3.5 4z" fill="#f4f4f4"/></svg>
<svg class="ic" style="left:1073px;top:837px" width="18" height="16" viewBox="0 0 18 16"><path d="M1 14.700h16M1.400 14.700L14 1.600" stroke="#2a8cff" stroke-width="1.400" fill="none"/><rect x="6.600" y="6.900" width="3" height="3" fill="#2a8cff"/></svg>
<svg class="ic" style="left:1098.5px;top:836.5px" width="16" height="16" viewBox="0 0 16 16"><rect x="2.400" y="1.800" width="12.400" height="12.800" fill="none" stroke="#2a8cff" stroke-width="1.400"/><rect x="1" y="1" width="4.400" height="4.400" fill="#10d010" stroke="#0a1a0a" stroke-width=".9"/></svg>
<svg class="ic" style="left:1120.9px;top:841.5px" width="9" height="6" viewBox="0 0 9 6"><path d="M1 1h7l-3.5 4z" fill="#f4f4f4"/></svg>
<svg class="ic" style="left:1137.5px;top:836.5px" width="17" height="15" viewBox="0 0 17 15"><path d="M.5 1.700h16M.5 9.400h16" stroke="#c8c8c8" stroke-width="1.100"/><rect x=".5" y="3.500" width="9" height="2.800" fill="#c8c8c8"/><rect x=".5" y="11" width="9" height="3" fill="#c8c8c8"/></svg>
<svg class="ic" style="left:1160.7px;top:841.5px" width="9" height="6" viewBox="0 0 9 6"><path d="M1 1h7l-3.5 4z" fill="#f4f4f4"/></svg>
<svg class="ic" style="left:1176.5px;top:836.5px" width="17" height="17" viewBox="0 0 17 17"><path d="M1.500 4.300h5M4 1.800v5" stroke="#2a8cff" stroke-width="1.200"/><path d="M5.800 12V6.200h7.600" fill="none" stroke="#2a8cff" stroke-width="1.200"/><rect x="7.600" y="8" width="7.800" height="7.800" fill="#9dc86e"/></svg>
<svg class="ic" style="left:1202.5px;top:836.5px" width="17" height="17" viewBox="0 0 17 17"><path d="M2.600 4.400L9.200 1.600l6.400 2.600v7.600l-6.600 3.600-6.400-3.400zM2.600 4.400l6.400 3 6.600-3.200M9 7.400v8" fill="none" stroke="#2a8cff" stroke-width="1.400" stroke-linejoin="round"/><rect x="1" y="1" width="4.200" height="4.200" fill="#10d010" stroke="#0a1a0a" stroke-width=".9"/></svg>
<svg class="ic" style="left:1225.8px;top:841.5px" width="9" height="6" viewBox="0 0 9 6"><path d="M1 1h7l-3.5 4z" fill="#f4f4f4"/></svg>
<svg class="ic" style="left:1245px;top:835.5px" width="18" height="18" viewBox="0 0 18 18"><path d="M8.500 .6l1.200 3.600c.7 2.400 1.300 4.300 2.300 6l4.900 6.300-1.800 .8-6.600-5-6.600 5-1.800-.8 4.900-6.300c1-1.700 1.600-3.600 2.300-6z" fill="#2a8cff"/><circle cx="12.600" cy="4.600" r="2.300" fill="#505050" stroke="#2a8cff" stroke-width="1.200"/></svg>
<svg class="ic" style="left:1269px;top:835.5px" width="18" height="18" viewBox="0 0 18 18"><path d="M8.500 .6l1.200 3.600c.7 2.400 1.300 4.300 2.300 6l4.900 6.300-1.800 .8-6.600-5-6.600 5-1.800-.8 4.900-6.300c1-1.700 1.600-3.600 2.300-6z" fill="#bdbdbd"/><path d="M13.400 1.800l-2.600 4h2.200l-2 3.800" fill="none" stroke="#bdbdbd" stroke-width="1.100"/><path d="M9.400 1v6" stroke="#505050" stroke-width="1.200"/></svg>
<svg class="ic" style="left:1293px;top:835.5px" width="18" height="18" viewBox="0 0 18 18"><path d="M8.500 .6l1.200 3.600c.7 2.400 1.300 4.300 2.300 6l4.900 6.300-1.800 .8-6.600-5-6.600 5-1.800-.8 4.900-6.300c1-1.700 1.600-3.600 2.300-6z" fill="#bdbdbd"/></svg>
<svg class="ic" style="left:1380.2px;top:841.5px" width="9" height="6" viewBox="0 0 9 6"><path d="M1 1h7l-3.5 4z" fill="#f4f4f4"/></svg>
<svg class="ic" style="left:1400.3px;top:838px" width="13" height="13" viewBox="0 0 13 13"><g transform="translate(6.500 6.500)"><g fill="#c8c8c8"><rect x="-1.500" y="-6.300" width="3" height="3.200" transform="rotate(0)"/><rect x="-1.500" y="-6.300" width="3" height="3.200" transform="rotate(45)"/><rect x="-1.500" y="-6.300" width="3" height="3.200" transform="rotate(90)"/><rect x="-1.500" y="-6.300" width="3" height="3.200" transform="rotate(135)"/><rect x="-1.500" y="-6.300" width="3" height="3.200" transform="rotate(180)"/><rect x="-1.500" y="-6.300" width="3" height="3.200" transform="rotate(225)"/><rect x="-1.500" y="-6.300" width="3" height="3.200" transform="rotate(270)"/><rect x="-1.500" y="-6.300" width="3" height="3.200" transform="rotate(315)"/></g><circle r="4.600" fill="#c8c8c8"/><circle r="1.900" fill="#505050"/></g></svg>
<svg class="ic" style="left:1422px;top:841.5px" width="9" height="6" viewBox="0 0 9 6"><path d="M1 1h7l-3.5 4z" fill="#f4f4f4"/></svg>
<svg class="ic" style="left:1439px;top:837px" width="16" height="16" viewBox="0 0 16 16"><path d="M.8 7.900h14M7.800 .9v14" stroke="#d4d4d4" stroke-width="2"/></svg>
<svg class="ic" style="left:1469.5px;top:839px" width="10" height="12" viewBox="0 0 10 12"><rect x=".8" y=".8" width="7.800" height="10.400" fill="none" stroke="#c8c8c8" stroke-width="1.100"/><path d="M.8 2.600h7.800" stroke="#c8c8c8" stroke-width="1.300"/><g fill="#c8c8c8"><rect x="2.3" y="4.6" width="1.300" height="1.300"/><rect x="2.3" y="6.8" width="1.300" height="1.300"/><rect x="2.3" y="9" width="1.300" height="1.300"/><rect x="4.9" y="4.6" width="1.300" height="1.300"/><rect x="4.9" y="6.8" width="1.300" height="1.300"/><rect x="4.9" y="9" width="1.300" height="1.300"/></g></svg>
<svg class="ic" style="left:1492px;top:835.5px" width="18" height="18" viewBox="0 0 18 18"><circle cx="8.900" cy="9" r="7.500" fill="#0b4fa6" stroke="#2a8cff" stroke-width="1.500"/><path d="M8.200 12.300l5.400-4.200" stroke="#3d98ff" stroke-width="1.400"/><circle cx="8.200" cy="12.300" r=".9" fill="#3d98ff"/></svg>
<svg class="ic" style="left:1522px;top:836.5px" width="17" height="16" viewBox="0 0 17 16"><rect x="1.200" y="1.300" width="6" height="5.800" fill="none" stroke="#c8c8c8" stroke-width="1.100"/><circle cx="12.600" cy="7.100" r="3" fill="none" stroke="#c8c8c8" stroke-width="1.100"/><path d="M7.400 9.600l3.500 5.100H3.900z" fill="none" stroke="#c8c8c8" stroke-width="1.100"/></svg>
<svg class="ic" style="left:1552px;top:838px" width="18" height="14" viewBox="0 0 18 14"><rect x="1.200" y="1.300" width="15.600" height="11.200" fill="none" stroke="#d4d4d4" stroke-width="1.200"/><path d="M3.600 10.200l4-3.600M3.400 7.200v3.200h3.400M14.600 3.600l-4 3.600M14.800 6.600V3.400h-3.400" fill="none" stroke="#d4d4d4" stroke-width="1.200"/></svg>
<svg class="ic" style="left:1577.5px;top:838px" width="17" height="14" viewBox="0 0 17 14"><path d="M.7 1.900h15M.7 6.300h15M.7 12.300h15" stroke="#d4d4d4" stroke-width="2"/></svg>
<span id="t0" class="tx" style="left:55px;top:26.4px;font:normal normal 12px/18px 'Liberation Sans',sans-serif;color:#e4e4e4;transform:scaleX(0.9645);">Narzędzia główne</span>
<span id="t1" class="tx" style="left:170px;top:26.4px;font:normal normal 12px/18px 'Liberation Sans',sans-serif;color:#e4e4e4;transform:scaleX(0.9509);">Bryła</span>
<span id="t2" class="tx" style="left:216px;top:26.4px;font:normal normal 12px/18px 'Liberation Sans',sans-serif;color:#e4e4e4;transform:scaleX(0.9807);">Powierzchnia</span>
<span id="t3" class="tx" style="left:306px;top:26.4px;font:normal normal 12px/18px 'Liberation Sans',sans-serif;color:#ffffff;transform:scaleX(0.9293);">Siatka</span>
<span id="t4" class="tx" style="left:357px;top:26.4px;font:normal normal 12px/18px 'Liberation Sans',sans-serif;color:#e4e4e4;transform:scaleX(0.9812);">Wizualizuj</span>
<span id="t5" class="tx" style="left:430px;top:26.4px;font:normal normal 12px/18px 'Liberation Sans',sans-serif;color:#e4e4e4;transform:scaleX(0.9665);">Parametryczne</span>
<span id="t6" class="tx" style="left:528px;top:26.4px;font:normal normal 12px/18px 'Liberation Sans',sans-serif;color:#e4e4e4;transform:scaleX(0.9722);">Wstaw</span>
<span id="t7" class="tx" style="left:583px;top:26.4px;font:normal normal 12px/18px 'Liberation Sans',sans-serif;color:#e4e4e4;transform:scaleX(0.9450);">Opisz</span>
<span id="t8" class="tx" style="left:632px;top:26.4px;font:normal normal 12px/18px 'Liberation Sans',sans-serif;color:#e4e4e4;transform:scaleX(1.0197);">Widok</span>
<span id="t9" class="tx" style="left:686px;top:26.4px;font:normal normal 12px/18px 'Liberation Sans',sans-serif;color:#e4e4e4;transform:scaleX(0.9300);">Zarządzaj</span>
<span id="t10" class="tx" style="left:755px;top:26.4px;font:normal normal 12px/18px 'Liberation Sans',sans-serif;color:#e4e4e4;transform:scaleX(1.0014);">Wyniki pracy</span>
<span id="t11" class="tx" style="left:843px;top:26.4px;font:normal normal 12px/18px 'Liberation Sans',sans-serif;color:#e4e4e4;transform:scaleX(0.9078);">Rozszerzenia</span>
<span id="t12" class="tx" style="left:929px;top:26.4px;font:normal normal 12px/18px 'Liberation Sans',sans-serif;color:#e4e4e4;transform:scaleX(0.9674);">Autodesk 360</span>
<span id="t13" class="tx" style="left:1020px;top:26.4px;font:normal normal 12px/18px 'Liberation Sans',sans-serif;color:#e4e4e4;transform:scaleX(0.9398);">Express Tools</span>
<span id="t14" class="tx" style="left:1110px;top:26.4px;font:normal normal 12px/18px 'Liberation Sans',sans-serif;color:#e4e4e4;transform:scaleX(0.9395);">BIM 360</span>
<span id="t15" class="tx" style="left:1172px;top:26.4px;font:normal normal 12px/18px 'Liberation Sans',sans-serif;color:#e4e4e4;transform:scaleX(0.9692);">Polecane aplikacje</span>
<span id="t16" class="tx" style="left:14.5px;top:85.9px;font:normal normal 12px/18px 'Liberation Sans',sans-serif;color:#f2f2f2;transform:scaleX(0.9787);">Torus (siatka)</span>
<span id="t17" class="tx" style="left:20px;top:123.9px;font:normal normal 12px/18px 'Liberation Sans',sans-serif;color:#f2f2f2;transform:scaleX(0.9759);">Siatki elementarne</span>
<span id="t18" class="tx" style="left:167px;top:85.9px;font:normal normal 12px/18px 'Liberation Sans',sans-serif;color:#f2f2f2;transform:scaleX(1.0090);">Obiekt</span>
<span id="t19" class="tx" style="left:153.5px;top:100.9px;font:normal normal 12px/18px 'Liberation Sans',sans-serif;color:#f2f2f2;transform:scaleX(0.9888);">wygładzony</span>
<span id="t20" class="tx" style="left:245px;top:51.9px;font:normal normal 12px/18px 'Liberation Sans',sans-serif;color:#f2f2f2;transform:scaleX(0.9624);">Zwiększ gładkość</span>
<span id="t21" class="tx" style="left:245px;top:75.9px;font:normal normal 12px/18px 'Liberation Sans',sans-serif;color:#f2f2f2;transform:scaleX(0.9777);">Zmniejsz gładkość</span>
<span id="t22" class="tx" style="left:245px;top:99.9px;font:normal normal 12px/18px 'Liberation Sans',sans-serif;color:#f2f2f2;transform:scaleX(0.9678);">Wygładź siatkę</span>
<span id="t23" class="tx" style="left:375.5px;top:85.9px;font:normal normal 12px/18px 'Liberation Sans',sans-serif;color:#f2f2f2;transform:scaleX(0.9567);">Dodaj</span>
<span id="t24" class="tx" style="left:360.7px;top:100.9px;font:normal normal 12px/18px 'Liberation Sans',sans-serif;color:#f2f2f2;transform:scaleX(1.0214);">fałdowanie</span>
<span id="t25" class="tx" style="left:441.4px;top:85.9px;font:normal normal 12px/18px 'Liberation Sans',sans-serif;color:#f2f2f2;transform:scaleX(0.9388);">Usuń</span>
<span id="t26" class="tx" style="left:425px;top:100.9px;font:normal normal 12px/18px 'Liberation Sans',sans-serif;color:#f2f2f2;transform:scaleX(1.0074);">fałdowanie</span>
<span id="t27" class="tx" style="left:297.2px;top:123.9px;font:normal normal 12px/18px 'Liberation Sans',sans-serif;color:#f2f2f2;transform:scaleX(0.9113);">Siatka</span>
<span id="t28" class="tx" style="left:494.4px;top:85.9px;font:normal normal 12px/18px 'Liberation Sans',sans-serif;color:#f2f2f2;transform:scaleX(1.0010);">Wyciągnij</span>
<span id="t29" class="tx" style="left:504.5px;top:100.9px;font:normal normal 12px/18px 'Liberation Sans',sans-serif;color:#f2f2f2;transform:scaleX(0.9369);">ścianę</span>
<span id="t30" class="tx" style="left:575.5px;top:51.9px;font:normal normal 12px/18px 'Liberation Sans',sans-serif;color:#f2f2f2;transform:scaleX(0.9674);">Rozdziel powierzchnię</span>
<span id="t31" class="tx" style="left:575.5px;top:75.9px;font:normal normal 12px/18px 'Liberation Sans',sans-serif;color:#f2f2f2;transform:scaleX(0.9667);">Scal powierzchnię</span>
<span id="t32" class="tx" style="left:575.5px;top:99.9px;font:normal normal 12px/18px 'Liberation Sans',sans-serif;color:#f2f2f2;transform:scaleX(1.0243);">Zamknij otwór</span>
<span id="t33" class="tx" style="left:541.3px;top:123.9px;font:normal normal 12px/18px 'Liberation Sans',sans-serif;color:#f2f2f2;transform:scaleX(0.9739);">Edytowanie siatki</span>
<span id="t34" class="tx" style="left:727.2px;top:51.9px;font:normal normal 12px/18px 'Liberation Sans',sans-serif;color:#f2f2f2;transform:scaleX(0.9981);">Konwertuj na bryłę</span>
<span id="t35" class="tx" style="left:727.2px;top:75.9px;font:normal normal 12px/18px 'Liberation Sans',sans-serif;color:#f2f2f2;transform:scaleX(0.9985);">Konwertuj na powierzchnię</span>
<span id="t36" class="tx" style="left:915px;top:85.9px;font:normal normal 12px/18px 'Liberation Sans',sans-serif;color:#f2f2f2;transform:scaleX(0.9701);">Gładki</span>
<span id="t37" class="tx" style="left:885px;top:100.9px;font:normal normal 12px/18px 'Liberation Sans',sans-serif;color:#f2f2f2;transform:scaleX(1.0036);">zoptymalizowany</span>
<span id="t38" class="tx" style="left:798.2px;top:123.9px;font:normal normal 12px/18px 'Liberation Sans',sans-serif;color:#f2f2f2;transform:scaleX(0.9382);">Przekształć siatkę</span>
<span id="t39" class="tx" style="left:993px;top:85.9px;font:normal normal 12px/18px 'Liberation Sans',sans-serif;color:#f2f2f2;transform:scaleX(0.9085);">Płaszczyzna</span>
<span id="t40" class="tx" style="left:999.3px;top:100.9px;font:normal normal 12px/18px 'Liberation Sans',sans-serif;color:#f2f2f2;transform:scaleX(0.9765);">przekroju</span>
<span id="t41" class="tx" style="left:1083.4px;top:51.9px;font:normal normal 12px/18px 'Liberation Sans',sans-serif;color:#f2f2f2;transform:scaleX(0.9545);">Przekrój na bieżąco</span>
<span id="t42" class="tx" style="left:1083.4px;top:75.9px;font:normal normal 12px/18px 'Liberation Sans',sans-serif;color:#f2f2f2;transform:scaleX(0.9811);">Dodaj uskok</span>
<span id="t43" class="tx" style="left:1083.4px;top:99.9px;font:normal normal 12px/18px 'Liberation Sans',sans-serif;color:#f2f2f2;transform:scaleX(0.9648);">Generuj przekrój</span>
<span id="t44" class="tx" style="left:1055.3px;top:123.9px;font:normal normal 12px/18px 'Liberation Sans',sans-serif;color:#f2f2f2;transform:scaleX(0.9360);">Przekrój</span>
<span id="t45" class="tx" style="left:1197.3px;top:85.9px;font:normal normal 12px/18px 'Liberation Sans',sans-serif;color:#ffffff;transform:scaleX(0.9765);">Eliminacja</span>
<span id="t46" class="tx" style="left:1265.3px;top:85.9px;font:normal normal 12px/18px 'Liberation Sans',sans-serif;color:#f2f2f2;transform:scaleX(0.9963);">Brak filtru</span>
<span id="t47" class="tx" style="left:1350.3px;top:85.9px;font:normal normal 12px/18px 'Liberation Sans',sans-serif;color:#f2f2f2;transform:scaleX(0.9084);">Przesuń</span>
<span id="t48" class="tx" style="left:1338.6px;top:100.9px;font:normal normal 12px/18px 'Liberation Sans',sans-serif;color:#f2f2f2;transform:scaleX(1.0214);">metauchwyt</span>
<span id="t49" class="tx" style="left:1287.2px;top:123.9px;font:normal normal 12px/18px 'Liberation Sans',sans-serif;color:#f2f2f2;transform:scaleX(1.0064);">Wybór</span>
<span id="t50" class="tx" style="left:271px;top:3px;font:normal normal 13px/20px 'Liberation Sans',sans-serif;color:#ffffff;transform:scaleX(0.9190);">Modelowanie 3D</span>
<span id="t51" class="tx" style="left:649px;top:2.9px;font:normal normal 12px/18px 'Liberation Sans',sans-serif;color:#141414;transform:scaleX(0.9716);text-shadow:0 0 3px #888,0 0 3px #888,0 0 4px #808080,0 0 5px #777,0 0 6px #707070,0 0 8px #666,0 0 10px #555,0 0 12px #444;">Autodesk AutoCAD 2015</span>
<span id="t52" class="tx" style="left:790px;top:2.9px;font:normal normal 12px/18px 'Liberation Sans',sans-serif;color:#141414;transform:scaleX(0.9655);text-shadow:0 0 3px #888,0 0 3px #888,0 0 4px #808080,0 0 5px #777,0 0 6px #707070,0 0 8px #666,0 0 10px #555,0 0 12px #444;">Rysunek2.dwg</span>
<span id="t53" class="tx" style="left:1049px;top:4.2px;font:italic normal 11.5px/17px 'Liberation Sans',sans-serif;color:#b9b9b9;transform:scaleX(0.9214);">Wpisz słowo kluczowe lub frazę</span>
<span id="t54" class="tx" style="left:1275px;top:3.9px;font:normal normal 12.5px/19px 'Liberation Sans',sans-serif;color:#ffffff;transform:scaleX(0.9172);">Zarejestruj się</span>
<span id="t55" class="tx" style="left:31.3px;top:149.9px;font:normal normal 12px/18px 'Liberation Sans',sans-serif;color:#f4f4f4;transform:scaleX(0.9495);">Rysunek2*</span>
<span id="t56" class="tx" style="left:3px;top:178.9px;font:normal bold 11.5px/17px 'Liberation Sans',sans-serif;color:#ffffff;transform:scaleX(0.9727);">[−][Widok niestandardowy][cieniowanie z krAwędziami]</span>
<span id="t57" class="tx" style="left:21.8px;top:830.9px;font:normal bold 12px/18px 'Liberation Sans',sans-serif;color:#ffffff;transform:scaleX(1.0210);">Model</span>
<span id="t58" class="tx" style="left:80px;top:830.9px;font:normal normal 12px/18px 'Liberation Sans',sans-serif;color:#c8c8c8;transform:scaleX(0.9368);">Układ1</span>
<span id="t59" class="tx" style="left:139.3px;top:830.9px;font:normal normal 12px/18px 'Liberation Sans',sans-serif;color:#c8c8c8;transform:scaleX(0.9502);">Układ2</span>
<span id="t60" class="tx" style="left:498.4px;top:808.4px;font:italic normal 11.6px/17px 'Liberation Mono',monospace;color:#8a8a8a;transform:scaleX(1.0002);">Wpisz polecenie</span>
<span id="t61" class="tx" style="left:629.8px;top:834.8px;font:normal normal 13px/20px 'Liberation Sans',sans-serif;color:#ffffff;transform:scaleX(0.9526);">-207.7154, -127.6232, 0.0000</span>
<span id="t62" class="tx" style="left:804.7px;top:834.8px;font:normal normal 13px/20px 'Liberation Sans',sans-serif;color:#ffffff;transform:scaleX(0.8565);">MODEL</span>
<span id="t63" class="tx" style="left:1318.9px;top:834.8px;font:normal normal 13px/20px 'Liberation Sans',sans-serif;color:#ffffff;transform:scaleX(0.9203);">1:1 / 100%</span>
<span id="t64" class="tx" style="left:1493.5px;top:354.4px;font:normal normal 10.5px/16px 'Liberation Sans',sans-serif;color:#9aa1ab;transform:scaleX(0.9544);">GUW</span>
<span id="t65" class="tx" style="left:32.3px;top:747.7px;font:normal normal 11px/16px 'Liberation Sans',sans-serif;color:#a9b5c7;transform:rotate(-90deg) scaleX(0.9918);">WŁAŚCIWOŚCI</span>
</div>
</body></html>
